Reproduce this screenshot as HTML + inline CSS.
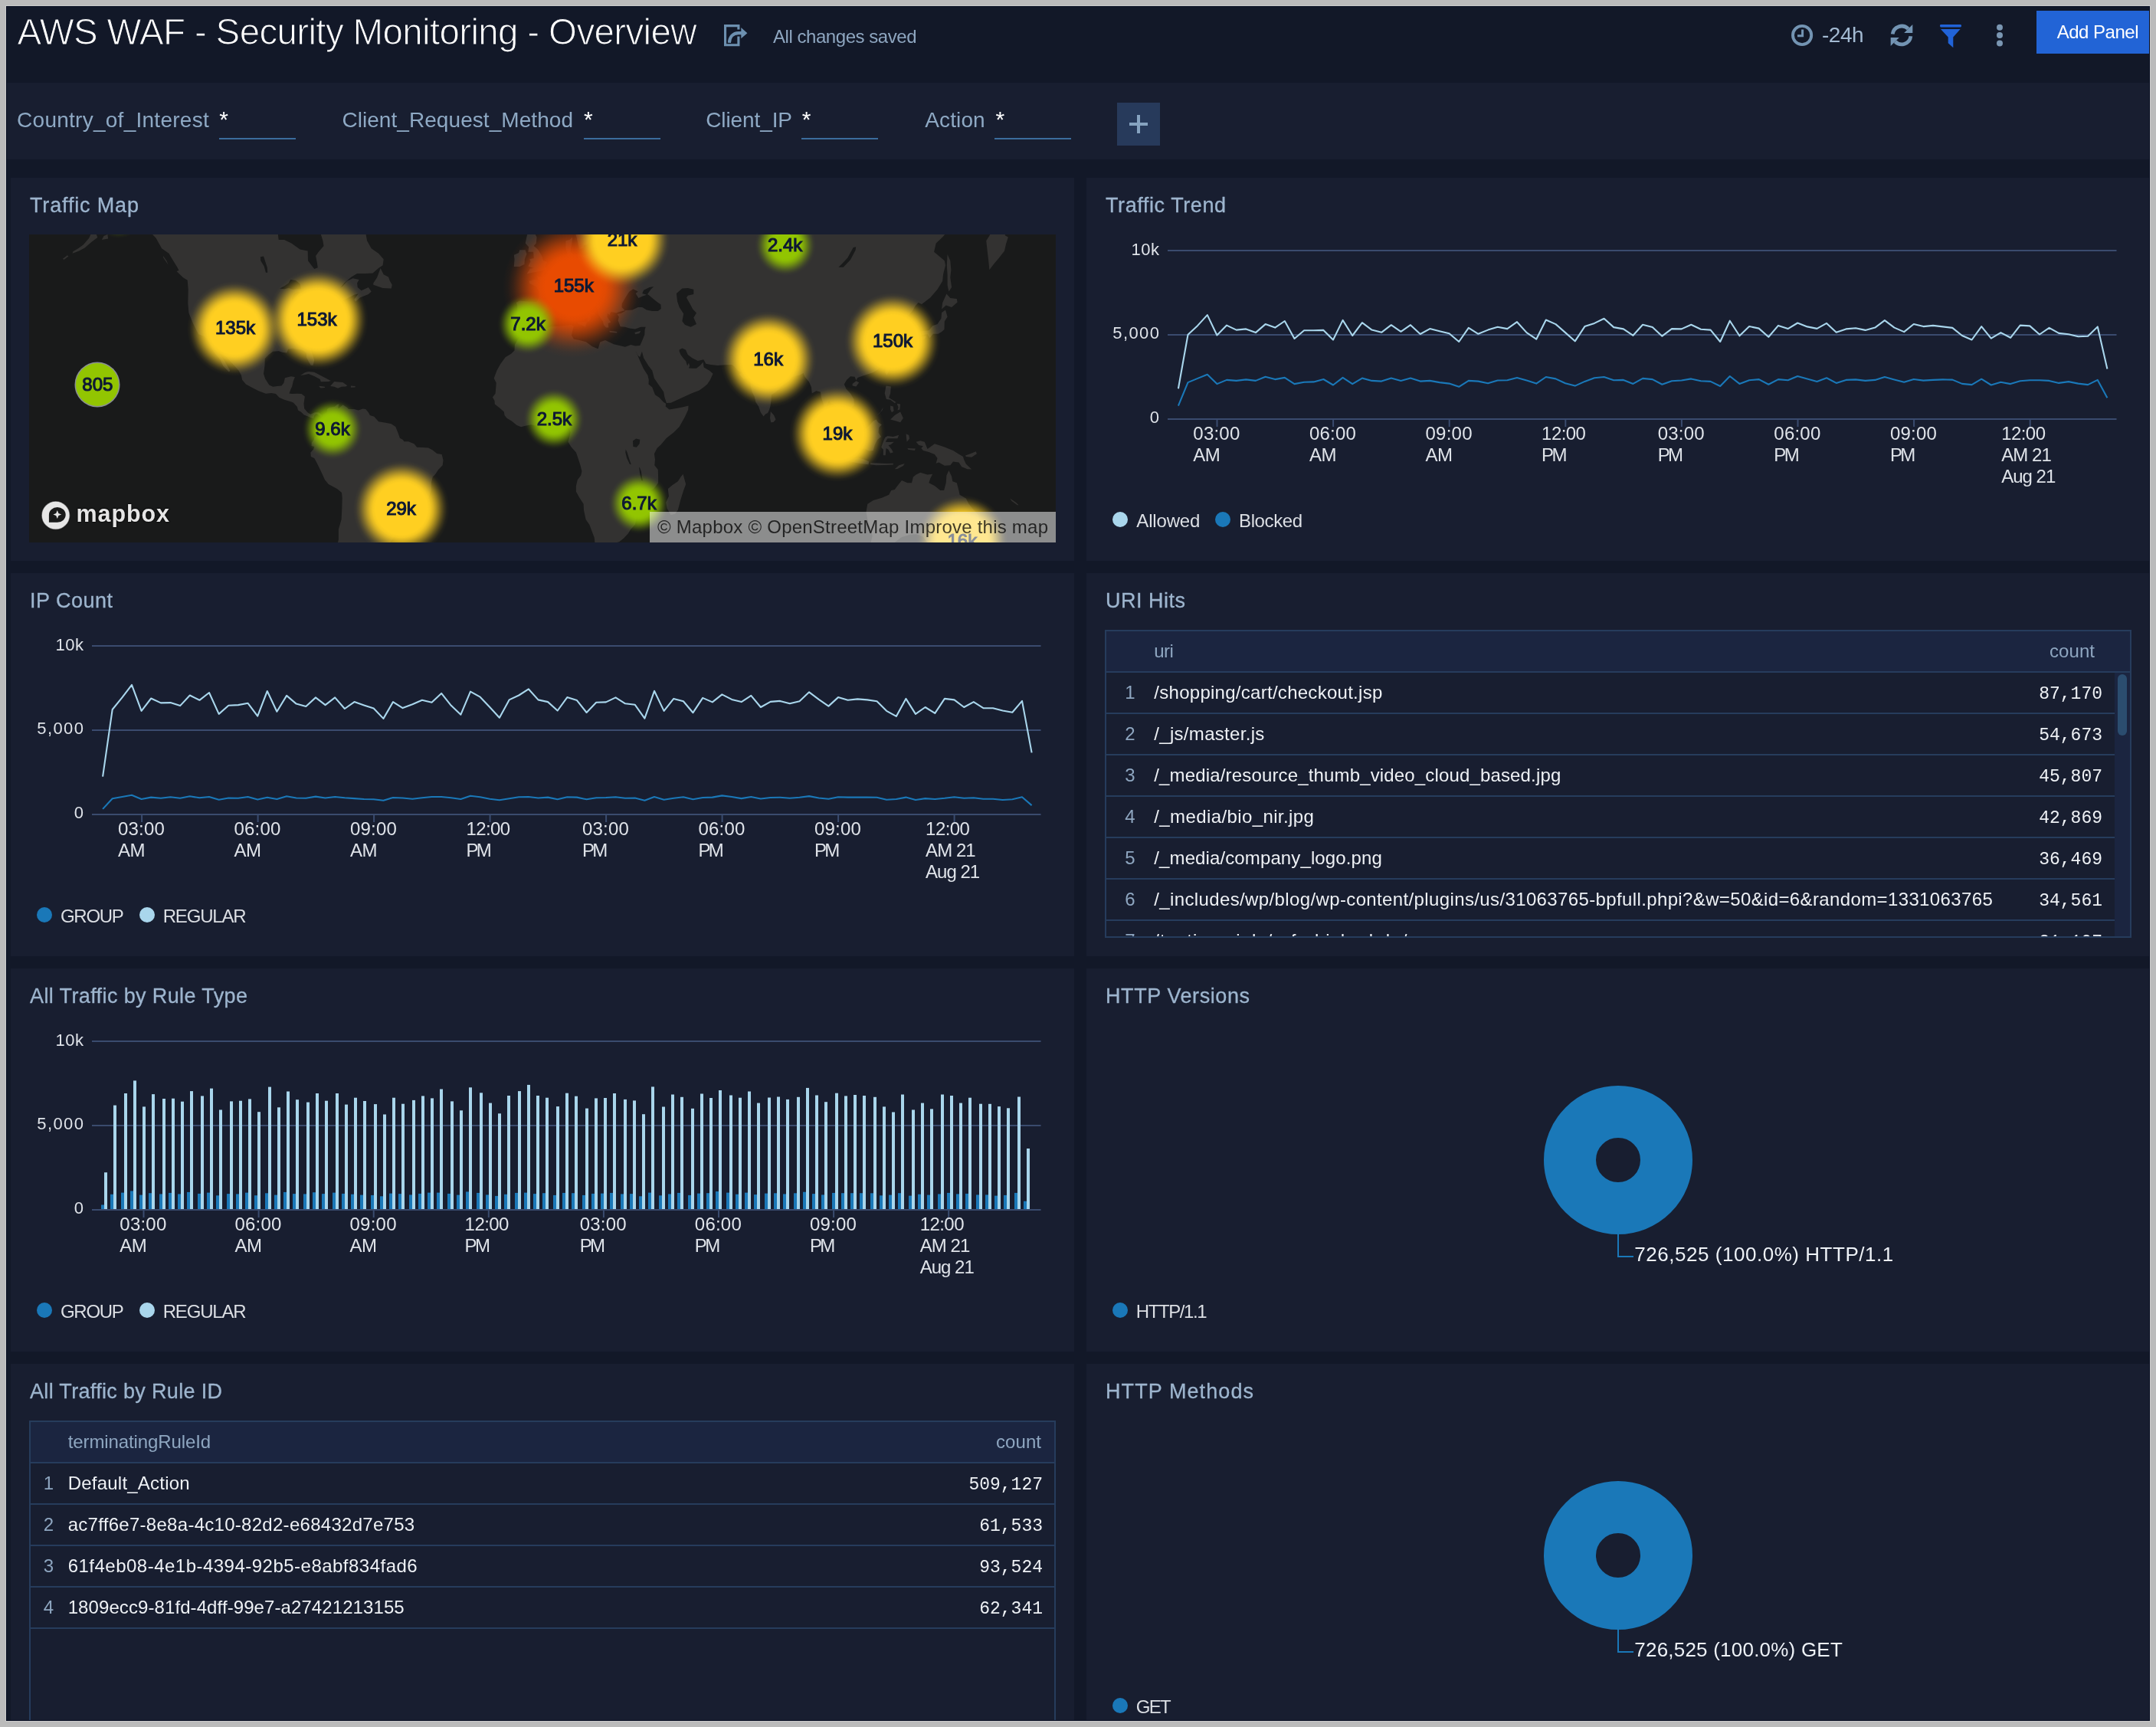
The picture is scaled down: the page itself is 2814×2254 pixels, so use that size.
<!DOCTYPE html>
<html lang="en"><head><meta charset="utf-8"><title>AWS WAF - Security Monitoring - Overview</title>
<style>
html,body{margin:0;padding:0;}
body{width:2814px;height:2254px;overflow:hidden;background:#bbbbbb;font-family:"Liberation Sans",sans-serif;position:relative;}
#app{will-change:transform;position:absolute;left:0;top:0;width:2814px;height:2254px;overflow:hidden;}
#page{position:absolute;left:8px;top:8px;width:2798px;height:2238px;background:#121828;box-shadow:inset 0 0 0 1px #0a1124;}
.t{position:absolute;white-space:pre;display:block;}
.abs{position:absolute;}
.pc{position:absolute;width:2814px;height:2254px;}
.panel{position:absolute;width:1388px;height:500px;background:#181e30;overflow:hidden;}
.filterbar{position:absolute;left:8px;top:108px;width:2798px;height:100px;background:#181e30;}
.uline{position:absolute;height:2px;width:100px;background:#3b6c9c;top:180px;}
svg{position:absolute;left:0;top:0;overflow:visible;}
svg text{font-family:"Liberation Sans",sans-serif;}
.tbl{position:absolute;box-sizing:border-box;border:2px solid #263c5c;}
.th{position:absolute;left:0;top:0;height:52px;background:#1b2540;border-bottom:2px solid #263c5c;}
.tr{position:absolute;left:0;height:52px;border-bottom:2px solid #263c5c;}
.blob{position:absolute;border-radius:50%;}
.bt{position:absolute;white-space:pre;font-size:24px;line-height:24px;color:#0e1934;-webkit-text-stroke:1.1px #0e1934;transform:translate(-50%,0);}
.frame{position:absolute;background:#bbbbbb;z-index:50;}
.fr2{position:absolute;z-index:51;}
</style></head><body><div id="app"><div id="page"></div>

<header>
<span class="t" style="left:22.50px;top:17.79px;font-size:47.5px;line-height:47.5px;color:#ffffff;letter-spacing:-0.650px;-webkit-text-stroke:1.1px #121828;">AWS WAF - Security Monitoring - Overview</span>
<svg width="2814" height="110" viewBox="0 0 2814 110">
<g fill="none" stroke="#6d90b0" stroke-width="3.1" stroke-linejoin="miter">
<path d="M963.9 38.6 V33.6 H946.55 V58.7 H963.9 V47.6"/>
<path d="M951.9 55.8 C952.2 48.5 956.5 43.1 964 43.1 H968" stroke-width="4.1"/>
</g>
<path d="M967.3 35.9 L975.4 43.2 L967.3 50.3 Z" fill="#6d90b0"/>
<!-- clock -->
<circle cx="2352.1" cy="46" r="12.1" fill="none" stroke="#7394b3" stroke-width="3.9"/>
<path d="M2352.6 38.4 V46.7 H2346" fill="none" stroke="#7394b3" stroke-width="3"/>
<!-- refresh -->
<g fill="none" stroke="#7394b3" stroke-width="4.8">
<path d="M2470.2 44.5 A12 12 0 0 1 2490.6 37.6"/>
<path d="M2493.9 47.3 A12 12 0 0 1 2473.5 54.3"/>
</g>
<path d="M2496.3 31.9 V43 H2485.2 Z" fill="#7394b3"/>
<path d="M2467.7 60 V48.9 H2478.8 Z" fill="#7394b3"/>
<!-- filter -->
<rect x="2532" y="32.1" width="28" height="3.3" rx="1.4" fill="#2163d8"/>
<path d="M2533 37.9 H2558.6 L2549.3 48.4 V62.2 L2542.7 56.3 V48.4 Z" fill="#2163d8"/>
<!-- kebab -->
<g fill="#7a96b2"><circle cx="2610" cy="35.7" r="4"/><circle cx="2610" cy="46" r="4"/><circle cx="2610" cy="56.4" r="4"/></g>
</svg>
<span class="t" style="left:1009.00px;top:36.08px;font-size:24px;line-height:24px;color:#8ea6c0;letter-spacing:-0.456px;">All changes saved</span>
<span class="t" style="left:2377.90px;top:32.20px;font-size:28px;line-height:28px;color:#a3bad2;letter-spacing:-0.415px;">-24h</span>
<div class="abs" style="left:2658px;top:14px;width:148px;height:56px;background:#2264d6;"></div>
<span class="t" style="left:2684.70px;top:29.68px;font-size:24px;line-height:24px;color:#ffffff;letter-spacing:-0.495px;">Add Panel</span>
</header>
<div class="filterbar"><div class="pc" style="left:-8px;top:-108px;">
<span class="t" style="left:22.10px;top:142.50px;font-size:28px;line-height:28px;color:#8ea9c4;letter-spacing:0.260px;">Country_of_Interest</span>
<span class="t" style="left:286.20px;top:141.41px;font-size:30px;line-height:30px;color:#ffffff;">*</span>
<div class="uline" style="left:285.7px;"></div>
<span class="t" style="left:446.40px;top:142.50px;font-size:28px;line-height:28px;color:#8ea9c4;letter-spacing:0.059px;">Client_Request_Method</span>
<span class="t" style="left:762.10px;top:141.41px;font-size:30px;line-height:30px;color:#ffffff;">*</span>
<div class="uline" style="left:761.8px;"></div>
<span class="t" style="left:921.20px;top:142.50px;font-size:28px;line-height:28px;color:#8ea9c4;letter-spacing:-0.102px;">Client_IP</span>
<span class="t" style="left:1046.80px;top:141.41px;font-size:30px;line-height:30px;color:#ffffff;">*</span>
<div class="uline" style="left:1045.6px;"></div>
<span class="t" style="left:1207.20px;top:142.50px;font-size:28px;line-height:28px;color:#8ea9c4;letter-spacing:0.135px;">Action</span>
<span class="t" style="left:1299.40px;top:141.41px;font-size:30px;line-height:30px;color:#ffffff;">*</span>
<div class="uline" style="left:1297.8px;"></div>
<div class="abs" style="left:1458px;top:134px;width:56px;height:56px;background:#273a5b;"></div>
<div class="abs" style="left:1474px;top:160px;width:24px;height:4px;background:#86a3c0;"></div><div class="abs" style="left:1484px;top:150px;width:4px;height:24px;background:#86a3c0;"></div>
</div></div>
<section class="panel" style="left:14px;top:232px;"><div class="pc" style="left:-14px;top:-232px;">
<span class="t" style="left:39.00px;top:255.14px;font-size:27px;line-height:27px;color:#9db5ce;letter-spacing:0.846px;-webkit-text-stroke:0.3px #9db5ce;">Traffic Map</span>
<div class="abs" id="map" style="left:38px;top:306px;width:1340px;height:402px;background:#191a1a;overflow:hidden;">
<svg width="1340" height="402" viewBox="0 0 1340 402" style="overflow:hidden"><path d="M37.2 -62.6 L74.4 -28.5 L104.2 -20.7 L111.7 -16.9 L126.6 -20.7 L145.2 -13.2 L158.2 -3.0 L165.6 4.8 L173.1 18.3 L182.4 24.8 L186.1 31.1 L193.6 43.3 L197.3 50.4 L206.6 59.0 L207.7 71.7 L207.3 90.1 L208.4 102.6 L213.7 115.5 L216.6 121.6 L221.1 130.3 L228.9 133.0 L233.8 139.2 L238.2 148.4 L243.8 157.0 L249.4 163.3 L253.1 171.5 L260.6 179.3 L262.4 178.1 L258.7 171.5 L255.0 165.3 L250.1 157.8 L244.5 148.4 L242.7 143.2 L248.6 145.8 L252.0 152.7 L256.8 159.1 L262.4 165.3 L268.0 171.5 L273.6 177.7 L276.9 183.7 L278.1 189.7 L282.9 195.6 L290.3 199.6 L299.6 204.3 L308.9 207.7 L316.4 207.0 L322.0 208.1 L326.4 212.8 L333.1 215.8 L342.4 218.5 L345.1 219.7 L349.9 225.0 L351.0 229.5 L354.7 231.4 L358.8 235.6 L362.9 237.1 L367.8 239.3 L371.1 240.1 L372.2 236.3 L374.8 234.1 L378.9 236.3 L381.5 239.3 L382.3 235.6 L377.8 232.2 L373.0 232.2 L367.4 234.8 L363.7 232.6 L359.2 227.3 L358.5 220.8 L359.9 211.6 L355.5 208.1 L349.9 207.7 L343.2 208.1 L339.5 207.4 L341.7 201.5 L343.2 198.4 L344.7 191.7 L346.9 186.1 L341.7 185.3 L333.9 187.3 L332.4 193.7 L329.4 197.6 L323.8 198.0 L318.2 198.8 L313.4 196.4 L308.2 188.5 L306.0 181.7 L307.5 171.5 L307.8 162.0 L312.7 157.0 L318.2 152.7 L325.7 152.3 L331.3 154.0 L336.5 154.4 L338.0 149.7 L344.3 148.8 L351.0 150.1 L356.6 150.6 L361.8 154.8 L362.2 160.7 L365.1 166.6 L367.8 170.7 L370.7 170.7 L372.2 164.1 L370.0 157.0 L367.0 148.4 L368.5 141.9 L374.1 137.5 L380.4 133.0 L385.2 129.8 L388.6 127.1 L387.1 119.7 L386.0 114.6 L390.1 112.2 L393.8 106.5 L394.6 102.6 L402.0 100.1 L408.7 96.6 L406.8 91.6 L409.4 86.0 L415.0 83.4 L420.6 80.8 L424.3 78.7 L429.5 77.6 L424.3 85.0 L426.2 87.5 L431.8 82.4 L442.9 78.1 L446.7 74.4 L442.9 69.0 L433.6 73.3 L428.8 69.0 L428.1 63.5 L430.7 59.0 L422.5 57.3 L415.0 60.7 L409.4 67.4 L405.7 70.1 L411.3 63.5 L420.6 55.6 L428.1 51.0 L439.2 51.0 L448.5 50.4 L456.0 43.9 L461.6 40.3 L462.7 32.3 L456.0 24.8 L446.7 18.3 L441.1 8.2 L439.2 -2.2 L429.9 -16.9 L409.4 -36.6 L379.7 -36.6 L381.5 -13.2 L379.7 -3.7 L383.4 8.2 L384.5 15.0 L377.8 22.8 L374.1 27.9 L375.9 37.3 L376.7 43.3 L372.2 45.1 L368.5 40.3 L364.0 34.2 L363.7 21.5 L353.6 19.6 L342.4 11.6 L333.1 6.9 L325.7 6.9 L324.6 -2.2 L318.2 -5.8 L317.5 -20.7 L260.6 -81.6 L148.9 -102.4 L37.2 -102.4ZM85.6 -5.8 L89.3 4.1 L81.9 9.6 L72.6 17.6 L65.1 21.5 L56.6 24.8 L57.3 22.2 L64.0 18.3 L70.7 13.6 L78.2 4.8 L81.9 -3.7 L83.8 -9.5ZM51.4 28.6 L45.4 33.0 L43.9 31.7 L49.9 27.3ZM94.9 6.9 L103.1 5.5 L102.4 -0.1 L97.5 2.0ZM192.4 48.1 L201.0 56.2 L209.9 61.8 L210.7 59.0 L204.7 52.2 L195.4 46.9ZM174.9 27.9 L179.4 34.2 L181.6 39.7 L178.7 35.4 L175.3 30.5ZM449.3 65.7 L461.6 70.1 L472.7 70.6 L473.8 65.7 L470.9 60.7 L469.0 55.6 L462.7 52.2 L458.6 43.9 L456.7 49.2 L454.1 56.2 L449.3 63.5ZM354.0 184.1 L360.3 180.1 L364.8 178.9 L372.2 179.7 L380.4 184.1 L389.0 188.5 L393.8 190.9 L390.8 192.1 L380.8 192.3 L379.7 188.9 L372.2 184.9 L364.8 182.1 L359.2 183.3ZM393.1 198.0 L398.3 192.1 L403.1 192.5 L409.4 192.9 L415.4 197.2 L413.2 198.4 L407.6 198.8 L403.1 200.7 L398.3 198.8ZM419.9 197.6 L425.8 198.0 L425.4 199.6 L419.9 199.8ZM378.6 197.8 L386.0 198.8 L386.0 200.0 L380.8 200.4 L378.6 198.8ZM381.5 239.3 L383.4 235.2 L388.6 232.2 L389.0 228.0 L391.6 226.1 L398.3 225.0 L402.0 221.9 L404.6 221.2 L403.1 226.5 L404.6 226.9 L409.4 222.3 L415.0 225.7 L416.9 228.0 L424.3 228.0 L429.9 229.5 L435.5 227.6 L439.2 228.0 L442.9 232.2 L444.8 235.9 L450.4 237.8 L456.0 244.2 L465.3 245.7 L472.7 247.2 L478.3 250.9 L482.0 260.3 L483.9 265.8 L487.6 267.7 L489.5 270.3 L495.1 270.3 L502.5 273.3 L506.2 277.8 L513.7 278.1 L521.1 278.5 L526.7 281.5 L532.3 286.0 L538.6 287.1 L540.5 294.6 L539.7 301.3 L534.1 307.0 L530.4 312.7 L526.7 316.5 L524.8 324.2 L524.8 333.9 L522.2 341.7 L518.1 350.9 L513.7 355.7 L504.4 356.5 L497.7 359.8 L491.3 365.1 L489.1 372.1 L488.4 378.4 L483.9 384.8 L480.2 391.3 L475.7 395.7 L470.9 402.4 L465.3 411.5 L454.1 420.8 L402.0 420.8 L402.0 406.9 L403.9 397.9 L403.9 384.8 L407.6 372.1 L408.3 357.7 L408.7 343.7 L408.0 337.0 L402.0 331.9 L390.8 326.1 L386.0 320.3 L382.6 312.7 L378.9 305.1 L375.2 297.6 L372.2 291.9 L367.8 290.1 L367.4 284.5 L371.1 280.4 L372.2 277.0 L368.5 275.9 L368.9 271.4 L371.9 267.7 L372.2 264.7 L376.3 263.2 L377.8 258.4 L381.5 254.7 L382.3 249.1 L381.5 243.5 L380.0 240.8ZM648.0 124.8 L660.7 127.6 L670.0 124.8 L681.2 120.2 L696.1 119.3 L707.2 117.9 L710.9 119.7 L709.1 126.2 L708.0 131.6 L710.9 136.6 L718.4 137.9 L726.6 140.1 L735.1 146.2 L742.6 149.3 L745.2 140.5 L751.9 137.9 L763.1 143.2 L777.9 146.7 L785.4 144.1 L791.0 145.4 L797.3 144.9 L799.9 152.7 L797.3 159.9 L794.7 158.2 L791.3 151.0 L794.7 159.1 L798.4 167.4 L802.1 175.6 L807.4 183.7 L808.8 189.7 L808.5 195.6 L813.3 199.6 L817.0 209.3 L822.6 213.1 L828.2 218.9 L831.2 220.8 L830.8 224.6 L835.6 228.4 L843.1 227.3 L852.4 225.4 L860.6 223.5 L860.2 228.8 L856.1 237.8 L848.7 250.9 L841.2 258.4 L831.9 265.8 L824.5 274.4 L819.6 278.9 L815.9 286.3 L817.0 293.8 L816.3 301.3 L820.8 307.0 L821.1 316.5 L821.1 324.2 L815.2 331.9 L807.4 335.8 L800.3 343.7 L802.1 351.7 L801.8 359.8 L792.8 365.9 L792.1 372.1 L791.0 378.4 L785.4 384.8 L781.7 390.5 L776.1 396.6 L770.5 401.1 L763.1 403.3 L744.4 406.9 L738.5 403.3 L737.7 395.7 L734.4 387.0 L731.4 378.9 L726.6 372.1 L724.0 359.8 L723.6 351.7 L718.4 343.7 L713.9 335.8 L713.9 328.0 L715.8 320.3 L720.2 314.6 L721.4 308.9 L719.5 301.3 L715.8 290.1 L713.9 284.5 L707.2 277.0 L703.5 270.7 L705.0 265.5 L706.5 258.4 L705.4 253.5 L701.6 250.9 L696.1 251.3 L690.5 249.8 L686.7 244.6 L679.3 244.2 L674.5 245.3 L666.3 248.3 L662.6 249.8 L655.1 248.3 L647.7 249.8 L642.1 251.3 L636.5 249.1 L629.8 243.5 L623.5 239.7 L620.5 235.9 L619.8 231.4 L614.2 226.5 L607.8 221.6 L607.5 217.0 L604.9 212.4 L608.6 207.4 L609.3 199.6 L609.7 193.7 L606.7 187.7 L610.4 177.7 L614.9 169.5 L621.6 160.3 L629.1 155.7 L633.5 151.4 L633.9 144.1 L638.4 136.1 L644.7 133.0ZM853.5 312.7 L857.2 326.1 L854.2 333.9 L850.5 345.7 L846.8 359.8 L843.1 364.7 L837.5 365.9 L832.7 357.7 L831.2 349.7 L834.9 341.7 L833.8 331.9 L839.4 327.3 L846.8 322.3 L850.5 316.5ZM649.2 123.9 L645.8 120.2 L642.1 119.3 L636.9 119.3 L637.2 112.2 L634.6 111.3 L637.2 100.1 L637.2 92.6 L635.8 89.1 L640.2 86.5 L651.4 87.5 L662.6 88.0 L665.2 82.4 L665.5 74.4 L661.8 67.9 L653.2 64.1 L652.5 60.7 L658.8 59.0 L664.0 59.6 L663.3 53.9 L665.5 55.6 L670.7 55.0 L675.6 51.0 L676.3 46.9 L681.2 44.5 L684.9 40.3 L687.9 34.2 L692.3 31.1 L696.1 30.5 L701.6 29.2 L702.4 24.8 L700.5 18.3 L700.5 8.2 L705.4 6.9 L709.1 3.4 L708.3 11.6 L707.2 18.3 L706.5 22.8 L710.9 26.7 L716.5 25.4 L722.1 27.9 L729.6 26.0 L738.9 23.5 L743.7 25.4 L748.2 21.5 L748.2 8.2 L751.9 3.4 L757.5 8.2 L760.5 4.8 L761.2 -1.5 L757.5 -9.5 L774.2 -13.2 L781.7 -28.5 L893.3 -62.6 L1042.2 -81.6 L1191.1 -62.6 L1265.6 -44.9 L1278.6 -28.5 L1276.7 -9.5 L1273.7 1.3 L1277.8 3.4 L1274.9 13.0 L1273.0 21.5 L1265.6 31.1 L1259.2 38.5 L1253.3 46.3 L1252.5 37.3 L1250.7 21.5 L1249.2 8.2 L1253.6 1.3 L1258.1 -9.5 L1265.6 -20.7 L1250.7 -24.6 L1243.2 -9.5 L1232.1 -5.8 L1220.9 -8.0 L1202.3 -8.7 L1193.0 2.7 L1183.7 11.6 L1181.1 22.8 L1187.4 27.9 L1194.8 34.2 L1196.0 40.3 L1193.0 52.2 L1192.2 60.7 L1185.5 71.7 L1176.2 82.4 L1165.1 91.1 L1160.6 89.1 L1156.5 93.6 L1152.8 100.1 L1148.3 105.0 L1144.6 107.4 L1147.6 112.2 L1151.7 119.3 L1151.7 126.2 L1148.3 128.9 L1140.9 131.2 L1140.5 123.9 L1141.6 119.3 L1135.3 115.5 L1136.0 107.4 L1132.7 105.0 L1124.1 108.9 L1121.5 109.8 L1124.1 102.6 L1120.4 100.6 L1112.9 108.9 L1108.5 109.8 L1111.1 114.6 L1112.9 117.9 L1119.6 115.5 L1126.0 117.9 L1120.4 121.6 L1114.8 127.1 L1117.8 133.0 L1120.4 139.7 L1123.7 144.1 L1123.4 150.6 L1122.2 157.0 L1116.7 165.3 L1112.9 171.5 L1107.4 176.4 L1101.8 180.1 L1094.3 182.5 L1086.9 184.9 L1081.3 186.9 L1079.4 190.5 L1077.6 185.7 L1072.0 185.3 L1067.2 189.7 L1063.8 195.6 L1066.4 201.5 L1072.0 207.4 L1076.5 215.1 L1076.8 222.7 L1072.0 227.6 L1067.5 229.2 L1062.0 235.2 L1060.1 230.3 L1055.2 228.0 L1051.5 222.7 L1045.9 220.0 L1044.1 217.0 L1042.2 220.8 L1040.4 226.5 L1039.6 232.9 L1043.3 237.8 L1045.9 242.3 L1050.4 244.6 L1054.9 250.9 L1055.2 257.3 L1057.9 262.5 L1055.2 262.9 L1047.8 257.6 L1044.1 252.8 L1043.3 245.3 L1040.4 239.7 L1035.9 237.1 L1036.6 230.3 L1037.4 222.7 L1034.0 213.1 L1032.9 205.4 L1027.3 204.3 L1021.7 207.4 L1021.0 199.6 L1018.0 192.5 L1012.4 185.7 L1010.6 180.9 L1005.0 183.7 L999.4 184.9 L993.8 186.5 L992.0 191.7 L986.4 193.7 L978.9 201.5 L973.4 206.6 L968.9 209.3 L968.5 217.0 L967.4 224.6 L965.9 229.2 L964.1 232.9 L961.1 234.4 L958.5 237.4 L954.8 232.2 L952.1 224.6 L948.4 218.9 L946.6 211.2 L943.6 205.4 L941.7 197.6 L941.0 189.7 L940.2 184.5 L938.0 187.7 L932.4 188.5 L926.8 182.5 L930.6 180.5 L925.0 177.7 L920.5 172.4 L917.5 169.9 L908.2 170.3 L898.9 171.1 L889.6 169.9 L883.3 168.7 L880.3 163.3 L872.9 164.9 L865.4 161.2 L859.8 157.0 L856.9 150.6 L852.4 148.4 L848.7 150.6 L848.7 152.7 L850.5 157.0 L854.2 162.0 L857.2 165.3 L859.1 171.5 L861.0 167.4 L862.1 171.5 L861.0 174.4 L865.4 174.8 L871.0 174.8 L876.6 170.3 L879.6 166.6 L880.7 173.6 L888.1 177.7 L892.6 181.7 L888.9 189.7 L885.1 195.6 L880.3 199.6 L874.7 203.5 L864.3 207.4 L852.4 213.1 L837.5 219.7 L831.9 220.0 L829.3 212.0 L828.2 205.4 L822.6 197.6 L815.9 187.7 L813.3 177.7 L808.5 171.5 L802.1 161.2 L799.9 152.7 L797.3 144.9 L800.3 138.3 L803.3 130.7 L803.6 123.9 L804.7 120.7 L798.4 120.7 L791.0 123.4 L783.5 122.5 L777.9 120.7 L771.6 120.2 L768.6 112.2 L769.8 107.4 L767.5 104.0 L772.4 103.0 L777.9 100.1 L777.9 99.1 L787.2 98.6 L794.7 95.1 L800.3 95.1 L805.9 98.6 L813.3 100.1 L820.8 100.1 L824.8 97.1 L824.5 91.6 L818.9 87.5 L813.3 82.9 L809.6 79.7 L807.0 78.1 L811.4 71.7 L815.2 67.9 L809.6 69.0 L802.1 72.8 L800.3 77.1 L805.9 78.7 L800.3 80.8 L795.4 82.9 L791.7 77.1 L794.7 74.4 L788.4 71.2 L783.5 74.4 L780.6 78.7 L776.8 85.0 L773.9 90.1 L773.5 95.1 L776.1 97.6 L777.6 99.6 L774.2 100.1 L768.6 101.6 L766.8 102.6 L759.3 101.1 L757.5 105.0 L754.9 103.0 L754.5 107.4 L757.5 112.2 L759.3 114.6 L755.6 116.0 L756.4 121.6 L753.0 121.6 L750.0 118.3 L748.9 113.6 L746.3 109.8 L742.6 103.5 L742.2 97.6 L738.9 92.6 L733.3 89.1 L727.7 85.0 L724.0 78.7 L721.0 76.6 L715.8 78.1 L715.8 83.4 L720.2 87.5 L724.0 93.6 L729.6 96.1 L729.6 98.1 L738.5 104.0 L738.1 105.5 L733.3 103.0 L731.4 106.5 L733.6 109.8 L730.7 113.2 L728.4 114.6 L728.8 107.4 L725.8 104.0 L722.1 101.1 L716.5 97.1 L710.9 92.6 L708.3 87.5 L702.8 82.9 L697.9 86.0 L692.3 89.6 L684.9 87.5 L681.2 90.1 L681.9 95.6 L677.4 98.6 L671.9 102.6 L668.9 108.4 L670.0 111.3 L667.4 115.5 L662.6 120.2 L653.2 120.7ZM651.4 -4.4 L658.8 -3.7 L662.6 3.4 L661.8 11.6 L658.8 15.0 L664.0 19.6 L669.3 27.9 L671.1 34.2 L676.3 36.1 L673.7 41.5 L675.2 45.1 L670.0 47.5 L662.6 48.7 L657.0 49.8 L649.5 51.6 L654.0 44.5 L658.8 43.9 L651.4 41.5 L654.4 35.4 L653.2 32.3 L658.8 31.1 L658.1 22.8 L651.4 22.8 L652.1 16.3 L647.7 11.6 L649.5 2.7ZM647.7 20.2 L649.5 25.4 L646.9 32.3 L646.5 39.1 L640.2 42.1 L632.8 42.1 L633.5 32.3 L632.8 26.7 L639.1 24.1 L640.2 20.2ZM712.1 -5.8 L716.5 11.6 L718.4 18.9 L723.2 18.3 L724.0 14.3 L729.6 13.0 L731.8 4.8 L733.3 -5.8ZM716.5 114.6 L728.1 113.6 L726.2 120.7 L716.5 116.5ZM700.5 100.1 L706.1 100.1 L705.7 108.9 L701.6 109.8ZM702.0 90.6 L705.4 90.6 L705.0 97.6 L702.4 96.6ZM757.5 125.7 L767.5 127.1 L766.8 128.5 L757.8 127.6ZM790.2 128.0 L798.4 125.7 L796.6 128.9 L791.3 130.3ZM1191.1 97.6 L1192.2 89.1 L1197.4 77.6 L1202.3 82.9 L1210.8 83.9 L1211.6 88.6 L1204.1 95.1 L1196.7 92.6ZM1196.0 98.6 L1198.6 107.4 L1194.8 113.6 L1194.5 123.9 L1191.1 127.1 L1186.6 129.8 L1179.9 129.8 L1175.5 135.2 L1172.5 130.3 L1165.1 131.6 L1157.6 133.0 L1157.6 130.7 L1163.2 126.2 L1174.4 125.3 L1179.2 119.3 L1185.5 116.9 L1190.4 109.8 L1191.1 102.1ZM1153.9 135.2 L1160.6 134.8 L1161.3 138.3 L1158.7 144.5 L1154.6 145.4 L1153.9 139.7ZM1163.2 133.9 L1170.6 132.1 L1169.9 135.2 L1165.1 138.3ZM1198.6 26.0 L1202.3 34.2 L1203.4 46.3 L1202.3 56.2 L1204.1 69.0 L1200.4 74.4 L1198.6 66.3 L1198.6 52.2 L1197.8 40.3ZM1120.4 170.7 L1124.1 173.6 L1119.6 183.7 L1117.0 179.7ZM1074.6 194.9 L1079.4 191.3 L1083.2 193.3 L1079.4 198.4 L1074.6 197.6ZM967.8 231.0 L972.2 235.9 L974.5 241.6 L971.5 245.0 L968.2 245.3 L967.0 239.7ZM1118.5 197.6 L1124.9 198.4 L1124.1 207.4 L1122.2 213.1 L1131.6 218.9 L1129.7 220.0 L1124.1 215.8 L1118.9 215.1 L1116.7 207.4ZM1124.1 241.6 L1129.7 235.9 L1137.1 231.4 L1140.9 239.7 L1137.1 245.3 L1131.6 243.5ZM1124.1 223.5 L1127.8 224.6 L1128.6 230.3 L1126.0 232.2 L1124.1 228.4ZM1132.7 220.8 L1137.1 221.6 L1136.4 228.4 L1133.4 229.5 L1134.5 225.4ZM1106.2 235.9 L1111.1 231.8 L1114.8 225.4 L1113.7 229.2 L1109.2 234.1ZM1075.7 262.1 L1079.4 261.4 L1085.0 257.3 L1090.6 254.7 L1096.2 249.8 L1101.8 243.5 L1105.5 241.6 L1108.1 245.3 L1112.9 248.3 L1109.2 252.1 L1108.5 258.4 L1112.2 264.0 L1107.4 267.7 L1103.6 275.1 L1101.8 281.9 L1096.2 282.6 L1090.6 279.6 L1085.0 279.6 L1080.2 277.0 L1079.4 272.5 L1075.7 267.7ZM1024.7 246.8 L1032.9 248.3 L1038.5 253.9 L1044.1 259.1 L1049.7 262.1 L1055.2 267.7 L1059.0 273.3 L1064.6 278.9 L1063.8 289.3 L1059.0 289.3 L1051.5 283.3 L1045.9 277.0 L1040.4 269.6 L1036.6 261.4 L1031.1 256.5ZM1061.6 293.1 L1066.4 290.1 L1073.9 292.3 L1082.4 291.6 L1089.5 293.4 L1096.2 296.4 L1095.5 300.2 L1083.2 298.7 L1073.9 296.8 L1066.4 295.3ZM1098.1 298.3 L1105.5 298.3 L1112.9 298.7 L1120.4 299.1 L1127.8 298.7 L1127.8 300.6 L1116.7 301.0 L1105.5 301.3 L1098.1 300.2ZM1129.7 306.2 L1135.3 301.3 L1142.7 299.1 L1140.9 302.1 L1133.4 305.9ZM1114.8 288.2 L1114.8 280.7 L1112.2 277.8 L1115.9 267.7 L1117.4 264.7 L1120.4 262.9 L1127.8 264.0 L1135.3 261.7 L1133.4 266.2 L1127.8 266.2 L1120.4 266.2 L1117.8 270.7 L1122.2 271.1 L1129.0 270.7 L1124.1 274.4 L1121.5 275.1 L1126.0 280.7 L1127.8 284.5 L1124.1 285.6 L1121.5 280.7 L1118.5 278.9 L1117.8 288.2ZM1144.6 260.3 L1148.3 262.1 L1149.0 266.6 L1145.7 270.7 L1145.0 265.8ZM1146.4 278.9 L1156.9 279.6 L1155.8 281.9 L1147.2 280.7ZM1157.6 270.7 L1163.2 269.2 L1168.8 270.7 L1172.5 280.0 L1181.8 273.3 L1187.4 275.1 L1194.8 277.4 L1206.0 281.9 L1212.7 286.3 L1219.0 290.1 L1220.1 293.8 L1222.8 299.5 L1230.2 306.6 L1224.6 306.2 L1217.2 303.2 L1213.4 297.6 L1206.0 296.4 L1202.3 301.3 L1194.8 301.7 L1187.4 297.6 L1183.7 298.7 L1185.5 291.9 L1181.8 287.1 L1174.4 284.1 L1166.9 281.9 L1164.3 278.9 L1166.9 276.3 L1161.3 275.1ZM1222.0 288.6 L1228.3 286.3 L1235.8 283.3 L1236.9 286.3 L1230.2 290.8 L1222.8 290.1ZM1094.3 351.7 L1092.5 361.8 L1094.3 372.1 L1098.1 384.8 L1100.7 393.5 L1098.1 403.8 L1109.2 409.2 L1114.8 402.4 L1129.7 402.0 L1139.0 394.9 L1150.2 391.8 L1158.4 391.3 L1166.9 394.4 L1169.5 397.9 L1174.4 405.1 L1182.9 397.1 L1183.7 406.9 L1191.1 416.1 L1228.3 420.8 L1232.1 406.9 L1233.9 400.2 L1237.6 395.7 L1239.5 389.2 L1241.4 380.6 L1240.6 374.2 L1238.8 365.9 L1231.3 357.7 L1226.5 351.7 L1222.8 344.5 L1214.6 339.8 L1213.4 333.9 L1210.8 324.2 L1205.3 322.3 L1204.1 315.7 L1200.4 308.1 L1197.4 314.6 L1196.7 324.2 L1194.1 333.9 L1189.2 333.9 L1181.8 328.0 L1174.4 324.2 L1176.2 318.4 L1179.2 312.7 L1172.5 313.5 L1163.2 310.8 L1157.6 313.5 L1153.9 316.5 L1152.0 324.2 L1146.4 324.2 L1139.0 321.1 L1133.4 328.0 L1129.7 333.1 L1125.2 333.9 L1122.2 339.8 L1112.9 343.7 L1101.8 346.9ZM1280.4 344.5 L1287.9 349.7 L1291.6 353.3 L1289.8 353.3 L1282.3 347.7ZM89.3 190.9 L93.1 192.5 L91.2 195.6 L89.3 193.7Z" fill="#333231"/><path d="M844.9 77.1 L852.4 70.6 L859.8 70.1 L867.3 71.7 L867.3 78.1 L859.8 79.7 L858.0 82.4 L863.6 92.6 L866.2 97.6 L871.0 102.6 L867.3 108.4 L871.0 116.9 L863.6 120.7 L856.1 117.9 L852.4 113.2 L854.2 103.5 L848.7 95.1 L846.1 87.5ZM1056.4 42.7 L1062.7 42.7 L1072.0 33.0 L1078.7 20.2 L1079.1 16.3 L1075.7 17.0 L1068.3 30.5 L1060.8 38.5ZM327.2 70.6 L333.1 67.4 L338.7 63.5 L341.3 59.0 L348.0 60.1 L353.6 64.6 L355.1 71.2 L349.9 71.2 L344.3 71.7 L338.7 70.1 L333.1 71.2ZM342.8 96.1 L346.9 96.6 L349.1 90.1 L349.9 80.8 L353.6 75.5 L351.8 74.4 L346.9 76.6 L343.2 82.4 L343.2 90.1ZM355.1 74.4 L359.2 74.4 L366.6 75.0 L372.2 79.7 L371.5 82.4 L366.6 81.8 L365.5 89.1 L362.9 90.1 L359.6 86.0 L359.2 79.7 L355.1 76.0ZM359.6 96.6 L364.8 97.6 L372.2 94.1 L376.3 91.1 L374.1 90.6 L367.4 92.1 L361.8 95.1ZM373.0 88.6 L379.7 88.6 L386.0 87.0 L386.0 83.9 L379.7 85.2 L374.1 86.5ZM301.9 29.2 L306.0 28.6 L310.8 43.3 L311.2 49.8 L308.9 49.8 L306.7 41.5 L302.2 34.2ZM788.0 269.6 L792.1 266.6 L797.3 267.7 L796.6 273.3 L792.8 277.8 L788.4 277.0ZM778.7 280.4 L780.6 284.5 L783.5 293.8 L785.8 300.2 L783.9 299.8 L780.2 291.9 L778.3 284.5ZM796.6 303.6 L798.8 308.9 L799.9 316.5 L801.0 321.5 L799.2 321.1 L797.3 312.7 L796.2 305.1Z" fill="#191a1a"/></svg>
<div class="blob" style="left:617.5px;top:-23.0px;width:184.0px;height:184.0px;background:radial-gradient(circle closest-side,#e84b01 0,#e84b01 39.1%,#e84b01f4 46.7%,#e84b01d7 54.3%,#e84b01ae 62.0%,#e84b0180 69.6%,#e84b0151 77.2%,#e84b0128 84.8%,#e84b010b 92.4%,#e84b0100 100.0%);"></div>
<div class="blob" style="left:711.0px;top:-56.0px;width:126.0px;height:126.0px;background:radial-gradient(circle closest-side,#ffcf21 0,#ffcf21 54.0%,#ffcf21f4 59.7%,#ffcf21d7 65.5%,#ffcf21ae 71.2%,#ffcf2180 77.0%,#ffcf2151 82.7%,#ffcf2128 88.5%,#ffcf210b 94.2%,#ffcf2100 100.0%);"></div>
<div class="blob" style="left:205.5px;top:60.5px;width:124.0px;height:124.0px;background:radial-gradient(circle closest-side,#ffcf21 0,#ffcf21 53.2%,#ffcf21f4 59.1%,#ffcf21d7 64.9%,#ffcf21ae 70.8%,#ffcf2180 76.6%,#ffcf2151 82.5%,#ffcf2128 88.3%,#ffcf210b 94.2%,#ffcf2100 100.0%);"></div>
<div class="blob" style="left:311.0px;top:44.5px;width:132.0px;height:132.0px;background:radial-gradient(circle closest-side,#ffcf21 0,#ffcf21 56.1%,#ffcf21f4 61.6%,#ffcf21d7 67.0%,#ffcf21ae 72.5%,#ffcf2180 78.0%,#ffcf2151 83.5%,#ffcf2128 89.0%,#ffcf210b 94.5%,#ffcf2100 100.0%);"></div>
<div class="blob" style="left:901.6px;top:99.8px;width:126.0px;height:126.0px;background:radial-gradient(circle closest-side,#ffcf21 0,#ffcf21 54.0%,#ffcf21f4 59.7%,#ffcf21d7 65.5%,#ffcf21ae 71.2%,#ffcf2180 77.0%,#ffcf2151 82.7%,#ffcf2128 88.5%,#ffcf210b 94.2%,#ffcf2100 100.0%);"></div>
<div class="blob" style="left:1064.0px;top:76.0px;width:126.0px;height:126.0px;background:radial-gradient(circle closest-side,#ffcf21 0,#ffcf21 54.0%,#ffcf21f4 59.7%,#ffcf21d7 65.5%,#ffcf21ae 71.2%,#ffcf2180 77.0%,#ffcf2151 82.7%,#ffcf2128 88.5%,#ffcf210b 94.2%,#ffcf2100 100.0%);"></div>
<div class="blob" style="left:991.9px;top:197.0px;width:126.0px;height:126.0px;background:radial-gradient(circle closest-side,#ffcf21 0,#ffcf21 54.0%,#ffcf21f4 59.7%,#ffcf21d7 65.5%,#ffcf21ae 71.2%,#ffcf2180 77.0%,#ffcf2151 82.7%,#ffcf2128 88.5%,#ffcf210b 94.2%,#ffcf2100 100.0%);"></div>
<div class="blob" style="left:422.5px;top:295.0px;width:126.0px;height:126.0px;background:radial-gradient(circle closest-side,#ffcf21 0,#ffcf21 54.0%,#ffcf21f4 59.7%,#ffcf21d7 65.5%,#ffcf21ae 71.2%,#ffcf2180 77.0%,#ffcf2151 82.7%,#ffcf2128 88.5%,#ffcf210b 94.2%,#ffcf2100 100.0%);"></div>
<div class="blob" style="left:1157.8px;top:340.0px;width:120.0px;height:120.0px;background:radial-gradient(circle closest-side,#ffcf21 0,#ffcf21 53.3%,#ffcf21f4 59.2%,#ffcf21d7 65.0%,#ffcf21ae 70.8%,#ffcf2180 76.7%,#ffcf2151 82.5%,#ffcf2128 88.3%,#ffcf210b 94.2%,#ffcf2100 100.0%);"></div>
<div class="blob" style="left:85.0px;top:-59.0px;width:64.0px;height:64.0px;background:radial-gradient(circle closest-side,#92c501 0,#92c501 25.0%,#92c501f4 34.4%,#92c501d7 43.8%,#92c501ae 53.1%,#92c50180 62.5%,#92c50151 71.9%,#92c50128 81.2%,#92c5010b 90.6%,#92c50100 100.0%);"></div>
<div class="blob" style="left:946.7px;top:-26.0px;width:80.0px;height:80.0px;background:radial-gradient(circle closest-side,#92c501 0,#92c501 42.5%,#92c501f4 49.7%,#92c501d7 56.9%,#92c501ae 64.1%,#92c50180 71.2%,#92c50151 78.4%,#92c50128 85.6%,#92c5010b 92.8%,#92c50100 100.0%);"></div>
<div class="blob" style="left:611.0px;top:77.4px;width:80.0px;height:80.0px;background:radial-gradient(circle closest-side,#92c501 0,#92c501 42.5%,#92c501f4 49.7%,#92c501d7 56.9%,#92c501ae 64.1%,#92c50180 71.2%,#92c50151 78.4%,#92c50128 85.6%,#92c5010b 92.8%,#92c50100 100.0%);"></div>
<div class="blob" style="left:61.4px;top:168.0px;width:56.0px;height:56.0px;background:#92c501;box-shadow:0 0 0 1.5px #8a8f94;"></div>
<div class="blob" style="left:356.0px;top:213.7px;width:80.0px;height:80.0px;background:radial-gradient(circle closest-side,#92c501 0,#92c501 42.5%,#92c501f4 49.7%,#92c501d7 56.9%,#92c501ae 64.1%,#92c50180 71.2%,#92c50151 78.4%,#92c50128 85.6%,#92c5010b 92.8%,#92c50100 100.0%);"></div>
<div class="blob" style="left:645.4px;top:201.4px;width:80.0px;height:80.0px;background:radial-gradient(circle closest-side,#92c501 0,#92c501 42.5%,#92c501f4 49.7%,#92c501d7 56.9%,#92c501ae 64.1%,#92c50180 71.2%,#92c50151 78.4%,#92c50128 85.6%,#92c5010b 92.8%,#92c50100 100.0%);"></div>
<div class="blob" style="left:756.0px;top:311.0px;width:80.0px;height:80.0px;background:radial-gradient(circle closest-side,#92c501 0,#92c501 42.5%,#92c501f4 49.7%,#92c501d7 56.9%,#92c501ae 64.1%,#92c50180 71.2%,#92c50151 78.4%,#92c50128 85.6%,#92c5010b 92.8%,#92c50100 100.0%);"></div>
<span class="bt" style="left:710.7px;top:55.0px;">155k</span>
<span class="bt" style="left:774.0px;top:-5.0px;">21k</span>
<span class="bt" style="left:269.0px;top:109.6px;">135k</span>
<span class="bt" style="left:375.5px;top:99.0px;">153k</span>
<span class="bt" style="left:964.6px;top:150.8px;">16k</span>
<span class="bt" style="left:1127.0px;top:127.0px;">150k</span>
<span class="bt" style="left:1054.9px;top:248.0px;">19k</span>
<span class="bt" style="left:485.5px;top:346.0px;">29k</span>
<span class="bt" style="left:1217.8px;top:388.0px;">16k</span>
<span class="bt" style="left:986.7px;top:2.0px;">2.4k</span>
<span class="bt" style="left:651.0px;top:105.4px;">7.2k</span>
<span class="bt" style="left:89.4px;top:184.0px;">805</span>
<span class="bt" style="left:396.0px;top:241.7px;">9.6k</span>
<span class="bt" style="left:685.4px;top:229.4px;">2.5k</span>
<span class="bt" style="left:796.0px;top:339.0px;">6.7k</span>
<svg width="1340" height="402" viewBox="38 306 1340 402" style="overflow:hidden">
<circle cx="72.7" cy="672.7" r="18.6" fill="#e6e6e6" stroke="#111" stroke-opacity="0.6" stroke-width="1.5"/>
<path d="M63.9 681.8 V672 A10.9 9.9 0 1 1 74.8 681.8 Z" fill="#191a1a"/>
<path d="M74.8 666.1 L76.4 669.9 L80.2 671.5 L76.4 673.1 L74.8 676.9 L73.2 673.1 L69.4 671.5 L73.2 669.9 Z" fill="#e6e6e6"/>
</svg>
<span class="t" style="left:61.60px;top:349.48px;font-size:30.5px;line-height:30.5px;color:#e6e6e6;font-weight:700;letter-spacing:0.872px;text-shadow:0 0 2px #000,0 0 2px #000;">mapbox</span>
<div class="abs" style="left:810px;top:362px;width:530px;height:40px;background:rgba(255,255,255,0.5);"></div>
<span class="t" style="left:820.00px;top:369.98px;font-size:24px;line-height:24px;color:rgba(0,0,0,0.75);letter-spacing:0.227px;">© Mapbox © OpenStreetMap Improve this map</span>
</div>
</div></section>
<section class="panel" style="left:1418px;top:232px;"><div class="pc" style="left:-1418px;top:-232px;">
<span class="t" style="left:1443.00px;top:255.14px;font-size:27px;line-height:27px;color:#9db5ce;letter-spacing:0.578px;-webkit-text-stroke:0.3px #9db5ce;">Traffic Trend</span>
<svg width="2814" height="2254" viewBox="0 0 2814 2254" style="pointer-events:none"><line x1="1524" y1="327" x2="2762.5" y2="327" stroke="#3a4b6e" stroke-width="2"/><line x1="1524" y1="437" x2="2762.5" y2="437" stroke="#3a4b6e" stroke-width="2"/><line x1="1524" y1="547" x2="2762.5" y2="547" stroke="#3a4b6e" stroke-width="2"/><line x1="1588.5" y1="547" x2="1588.5" y2="557" stroke="#3a4b6e" stroke-width="2"/><line x1="1740.1" y1="547" x2="1740.1" y2="557" stroke="#3a4b6e" stroke-width="2"/><line x1="1891.7" y1="547" x2="1891.7" y2="557" stroke="#3a4b6e" stroke-width="2"/><line x1="2043.3" y1="547" x2="2043.3" y2="557" stroke="#3a4b6e" stroke-width="2"/><line x1="2194.9" y1="547" x2="2194.9" y2="557" stroke="#3a4b6e" stroke-width="2"/><line x1="2346.5" y1="547" x2="2346.5" y2="557" stroke="#3a4b6e" stroke-width="2"/><line x1="2498.1" y1="547" x2="2498.1" y2="557" stroke="#3a4b6e" stroke-width="2"/><line x1="2649.7" y1="547" x2="2649.7" y2="557" stroke="#3a4b6e" stroke-width="2"/><polyline points="1537.9,529.6 1550.5,499.1 1563.2,493.9 1575.8,488.7 1588.4,501.1 1601.1,495.9 1613.7,496.9 1626.3,495.4 1638.9,496.9 1651.6,491.7 1664.2,495.1 1676.8,492.9 1689.5,501.1 1702.1,498.8 1714.7,498.4 1727.4,495.0 1740.0,502.5 1752.6,492.9 1765.2,501.1 1777.9,493.6 1790.5,496.9 1803.1,497.6 1815.8,493.5 1828.4,496.9 1841.0,493.6 1853.7,497.6 1866.3,496.9 1878.9,499.1 1891.5,500.6 1904.2,504.8 1916.8,496.9 1929.4,497.6 1942.1,500.2 1954.7,496.5 1967.3,496.2 1980.0,492.9 1992.6,496.6 2005.2,500.6 2017.8,492.0 2030.5,494.4 2043.1,500.3 2055.7,503.6 2068.4,497.9 2081.0,493.2 2093.6,492.0 2106.2,496.2 2118.9,495.9 2131.5,500.9 2144.1,493.9 2156.8,495.1 2169.4,501.8 2182.0,497.3 2194.7,496.5 2207.3,494.4 2219.9,497.3 2232.6,497.9 2245.2,504.0 2257.8,491.0 2270.4,500.9 2283.1,496.2 2295.7,495.1 2308.3,501.8 2321.0,495.1 2333.6,496.2 2346.2,491.0 2358.9,494.4 2371.5,497.9 2384.1,493.2 2396.7,499.9 2409.4,495.9 2422.0,495.4 2434.6,496.9 2447.3,495.9 2459.9,492.0 2472.5,495.4 2485.2,498.8 2497.8,495.0 2510.4,496.6 2523.0,495.9 2535.7,495.4 2548.3,495.6 2560.9,500.9 2573.6,502.1 2586.2,494.7 2598.8,502.5 2611.4,498.8 2624.1,501.1 2636.7,497.3 2649.3,496.2 2662.0,496.2 2674.6,496.9 2687.2,499.9 2699.9,498.1 2712.5,500.6 2725.1,502.1 2737.8,495.9 2750.4,519.2" fill="none" stroke="#1a78b8" stroke-width="2.1" stroke-linejoin="round" stroke-linecap="butt"/><polyline points="1537.9,507.3 1550.5,436.8 1563.2,424.9 1575.8,411.1 1588.4,437.5 1601.1,424.6 1613.7,430.6 1626.3,429.4 1638.9,434.1 1651.6,423.1 1664.2,427.6 1676.8,419.0 1689.5,442.0 1702.1,431.3 1714.7,431.2 1727.4,430.9 1740.0,443.5 1752.6,417.9 1765.2,438.0 1777.9,421.2 1790.5,430.6 1803.1,433.8 1815.8,424.2 1828.4,432.8 1841.0,424.2 1853.7,436.0 1866.3,429.1 1878.9,432.3 1891.5,435.3 1904.2,446.0 1916.8,427.9 1929.4,435.8 1942.1,430.6 1954.7,426.8 1967.3,429.1 1980.0,420.2 1992.6,434.1 2005.2,442.7 2017.8,417.5 2030.5,423.1 2043.1,434.1 2055.7,445.3 2068.4,426.1 2081.0,421.9 2093.6,415.7 2106.2,427.1 2118.9,429.4 2131.5,437.8 2144.1,423.7 2156.8,427.1 2169.4,438.7 2182.0,429.1 2194.7,429.4 2207.3,423.7 2219.9,429.8 2232.6,430.6 2245.2,446.0 2257.8,418.7 2270.4,438.3 2283.1,426.0 2295.7,428.6 2308.3,439.8 2321.0,424.9 2333.6,429.1 2346.2,421.5 2358.9,426.4 2371.5,428.9 2384.1,421.9 2396.7,433.8 2409.4,429.4 2422.0,428.2 2434.6,430.9 2447.3,427.6 2459.9,418.2 2472.5,427.6 2485.2,433.1 2497.8,423.0 2510.4,426.1 2523.0,424.9 2535.7,426.4 2548.3,427.9 2560.9,438.0 2573.6,443.5 2586.2,426.1 2598.8,441.7 2611.4,434.1 2624.1,440.8 2636.7,424.6 2649.3,425.4 2662.0,436.5 2674.6,427.9 2687.2,434.9 2699.9,436.3 2712.5,439.3 2725.1,438.7 2737.8,426.4 2750.4,481.6" fill="none" stroke="#a9d6ec" stroke-width="2.1" stroke-linejoin="round" stroke-linecap="butt"/></svg>
<span class="t" style="left:1476.50px;top:314.68px;font-size:22px;line-height:22px;color:#dfe3e9;letter-spacing:0.514px;">10k</span><span class="t" style="left:1452.30px;top:424.18px;font-size:22px;line-height:22px;color:#dfe3e9;letter-spacing:1.411px;">5,000</span><span class="t" style="left:1500.76px;top:533.88px;font-size:22px;line-height:22px;color:#dfe3e9;">0</span>
<span class="t" style="left:1557.30px;top:554.18px;font-size:24px;line-height:24px;color:#dfe3e9;letter-spacing:0.235px;">03:00</span><span class="t" style="left:1557.30px;top:581.98px;font-size:24px;line-height:24px;color:#dfe3e9;letter-spacing:-0.502px;">AM</span><span class="t" style="left:1708.90px;top:554.18px;font-size:24px;line-height:24px;color:#dfe3e9;letter-spacing:0.235px;">06:00</span><span class="t" style="left:1708.90px;top:581.98px;font-size:24px;line-height:24px;color:#dfe3e9;letter-spacing:-0.502px;">AM</span><span class="t" style="left:1860.50px;top:554.18px;font-size:24px;line-height:24px;color:#dfe3e9;letter-spacing:0.235px;">09:00</span><span class="t" style="left:1860.50px;top:581.98px;font-size:24px;line-height:24px;color:#dfe3e9;letter-spacing:-0.502px;">AM</span><span class="t" style="left:2012.10px;top:554.18px;font-size:24px;line-height:24px;color:#dfe3e9;letter-spacing:-0.565px;">12:00</span><span class="t" style="left:2012.10px;top:581.98px;font-size:24px;line-height:24px;color:#dfe3e9;letter-spacing:-2.602px;">PM</span><span class="t" style="left:2163.70px;top:554.18px;font-size:24px;line-height:24px;color:#dfe3e9;letter-spacing:0.235px;">03:00</span><span class="t" style="left:2163.70px;top:581.98px;font-size:24px;line-height:24px;color:#dfe3e9;letter-spacing:-2.602px;">PM</span><span class="t" style="left:2315.30px;top:554.18px;font-size:24px;line-height:24px;color:#dfe3e9;letter-spacing:0.235px;">06:00</span><span class="t" style="left:2315.30px;top:581.98px;font-size:24px;line-height:24px;color:#dfe3e9;letter-spacing:-2.602px;">PM</span><span class="t" style="left:2466.90px;top:554.18px;font-size:24px;line-height:24px;color:#dfe3e9;letter-spacing:0.235px;">09:00</span><span class="t" style="left:2466.90px;top:581.98px;font-size:24px;line-height:24px;color:#dfe3e9;letter-spacing:-2.602px;">PM</span><span class="t" style="left:2612.20px;top:554.18px;font-size:24px;line-height:24px;color:#dfe3e9;letter-spacing:-0.565px;">12:00</span><span class="t" style="left:2612.20px;top:581.98px;font-size:24px;line-height:24px;color:#dfe3e9;letter-spacing:-0.941px;">AM 21</span><span class="t" style="left:2612.20px;top:609.78px;font-size:24px;line-height:24px;color:#dfe3e9;letter-spacing:-0.994px;">Aug 21</span>
<div class="abs" style="left:1452.2px;top:668px;width:20px;height:20px;border-radius:50%;background:#a9d6ec;"></div><span class="t" style="left:1483.30px;top:667.68px;font-size:24px;line-height:24px;color:#dcdfe4;letter-spacing:-0.158px;">Allowed</span><div class="abs" style="left:1586px;top:668px;width:20px;height:20px;border-radius:50%;background:#1a78b8;"></div><span class="t" style="left:1617.00px;top:667.68px;font-size:24px;line-height:24px;color:#dcdfe4;letter-spacing:-0.381px;">Blocked</span>
</div></section>
<section class="panel" style="left:14px;top:748px;"><div class="pc" style="left:-14px;top:-748px;">
<span class="t" style="left:39.00px;top:771.14px;font-size:27px;line-height:27px;color:#9db5ce;letter-spacing:0.489px;-webkit-text-stroke:0.3px #9db5ce;">IP Count</span>
<svg width="2814" height="2254" viewBox="0 0 2814 2254"><line x1="120" y1="843" x2="1358.5" y2="843" stroke="#3a4b6e" stroke-width="2"/><line x1="120" y1="953" x2="1358.5" y2="953" stroke="#3a4b6e" stroke-width="2"/><line x1="120" y1="1063" x2="1358.5" y2="1063" stroke="#3a4b6e" stroke-width="2"/><line x1="185.1" y1="1063" x2="185.1" y2="1073" stroke="#3a4b6e" stroke-width="2"/><line x1="336.6" y1="1063" x2="336.6" y2="1073" stroke="#3a4b6e" stroke-width="2"/><line x1="488.1" y1="1063" x2="488.1" y2="1073" stroke="#3a4b6e" stroke-width="2"/><line x1="639.6" y1="1063" x2="639.6" y2="1073" stroke="#3a4b6e" stroke-width="2"/><line x1="791.1" y1="1063" x2="791.1" y2="1073" stroke="#3a4b6e" stroke-width="2"/><line x1="942.6" y1="1063" x2="942.6" y2="1073" stroke="#3a4b6e" stroke-width="2"/><line x1="1094.1" y1="1063" x2="1094.1" y2="1073" stroke="#3a4b6e" stroke-width="2"/><line x1="1245.6" y1="1063" x2="1245.6" y2="1073" stroke="#3a4b6e" stroke-width="2"/><polyline points="134.1,1055.9 146.7,1042.2 159.4,1040.0 172.0,1037.8 184.6,1043.0 197.2,1040.6 209.9,1041.8 222.5,1040.3 235.1,1041.8 247.8,1039.3 260.4,1041.3 273.0,1040.0 285.7,1043.7 298.3,1041.5 310.9,1041.8 323.6,1040.0 336.2,1043.6 348.8,1040.7 361.4,1043.0 374.1,1039.3 386.7,1041.5 399.3,1041.8 412.0,1039.6 424.6,1041.5 437.2,1040.0 449.9,1041.3 462.5,1042.1 475.1,1043.0 487.7,1043.3 500.4,1044.7 513.0,1041.0 525.6,1041.5 538.3,1042.8 550.9,1041.3 563.5,1040.0 576.1,1040.0 588.8,1041.3 601.4,1043.0 614.0,1038.8 626.7,1040.3 639.3,1042.8 651.9,1044.3 664.6,1042.2 677.2,1040.3 689.8,1040.0 702.5,1041.5 715.1,1040.6 727.7,1043.3 740.3,1040.3 753.0,1040.6 765.6,1043.3 778.2,1041.3 790.9,1041.0 803.5,1040.3 816.1,1041.8 828.8,1041.5 841.4,1044.7 854.0,1040.0 866.6,1043.7 879.3,1041.8 891.9,1040.3 904.5,1043.3 917.2,1041.0 929.8,1040.6 942.4,1038.4 955.1,1040.0 967.7,1042.1 980.3,1040.0 992.9,1042.5 1005.6,1041.0 1018.2,1040.7 1030.8,1041.8 1043.5,1040.7 1056.1,1039.1 1068.7,1041.5 1081.4,1042.8 1094.0,1040.3 1106.6,1040.6 1119.2,1040.6 1131.9,1040.6 1144.5,1040.7 1157.1,1043.7 1169.8,1043.0 1182.4,1040.6 1195.0,1044.0 1207.6,1042.1 1220.3,1043.0 1232.9,1041.8 1245.5,1040.3 1258.2,1041.8 1270.8,1041.3 1283.4,1042.8 1296.1,1042.8 1308.7,1044.0 1321.3,1043.3 1334.0,1040.3 1346.6,1051.1" fill="none" stroke="#1a78b8" stroke-width="2.1" stroke-linejoin="round" stroke-linecap="butt"/><polyline points="134.1,1013.6 146.7,926.0 159.4,910.4 172.0,893.8 184.6,927.8 197.2,911.5 209.9,917.4 222.5,917.1 235.1,921.1 247.8,907.5 260.4,913.8 273.0,904.0 285.7,931.9 298.3,920.8 310.9,920.1 323.6,917.8 336.2,934.6 348.8,902.0 361.4,928.7 374.1,907.9 386.7,918.6 399.3,922.0 412.0,910.4 424.6,920.1 437.2,910.4 449.9,925.0 462.5,916.1 475.1,920.4 487.7,924.5 500.4,937.9 513.0,916.1 525.6,924.1 538.3,919.3 550.9,913.8 563.5,916.8 576.1,904.9 588.8,920.8 601.4,932.7 614.0,902.7 626.7,909.7 639.3,923.0 651.9,936.7 664.6,913.4 677.2,907.5 689.8,899.3 702.5,913.4 715.1,916.1 727.7,927.5 740.3,910.1 753.0,914.1 765.6,930.0 778.2,916.8 790.9,916.4 803.5,910.4 816.1,918.3 828.8,919.8 841.4,937.6 854.0,901.8 866.6,927.9 879.3,911.9 891.9,915.2 904.5,930.2 917.2,910.9 929.8,916.4 942.4,906.4 955.1,912.9 967.7,916.1 980.3,907.9 992.9,923.0 1005.6,915.9 1018.2,914.9 1030.8,918.3 1043.5,915.2 1056.1,903.3 1068.7,912.9 1081.4,921.6 1094.0,910.1 1106.6,913.8 1119.2,912.4 1131.9,913.4 1144.5,915.2 1157.1,927.8 1169.8,934.9 1182.4,911.9 1195.0,931.9 1207.6,923.0 1220.3,930.8 1232.9,911.9 1245.5,913.4 1258.2,923.0 1270.8,916.1 1283.4,924.1 1296.1,924.2 1308.7,927.5 1321.3,929.7 1334.0,914.9 1346.6,982.4" fill="none" stroke="#a9d6ec" stroke-width="2.1" stroke-linejoin="round" stroke-linecap="butt"/></svg>
<span class="t" style="left:72.50px;top:830.68px;font-size:22px;line-height:22px;color:#dfe3e9;letter-spacing:0.514px;">10k</span><span class="t" style="left:48.30px;top:940.18px;font-size:22px;line-height:22px;color:#dfe3e9;letter-spacing:1.411px;">5,000</span><span class="t" style="left:96.76px;top:1049.88px;font-size:22px;line-height:22px;color:#dfe3e9;">0</span>
<span class="t" style="left:153.90px;top:1070.18px;font-size:24px;line-height:24px;color:#dfe3e9;letter-spacing:0.235px;">03:00</span><span class="t" style="left:153.90px;top:1097.98px;font-size:24px;line-height:24px;color:#dfe3e9;letter-spacing:-0.502px;">AM</span><span class="t" style="left:305.40px;top:1070.18px;font-size:24px;line-height:24px;color:#dfe3e9;letter-spacing:0.235px;">06:00</span><span class="t" style="left:305.40px;top:1097.98px;font-size:24px;line-height:24px;color:#dfe3e9;letter-spacing:-0.502px;">AM</span><span class="t" style="left:456.90px;top:1070.18px;font-size:24px;line-height:24px;color:#dfe3e9;letter-spacing:0.235px;">09:00</span><span class="t" style="left:456.90px;top:1097.98px;font-size:24px;line-height:24px;color:#dfe3e9;letter-spacing:-0.502px;">AM</span><span class="t" style="left:608.40px;top:1070.18px;font-size:24px;line-height:24px;color:#dfe3e9;letter-spacing:-0.565px;">12:00</span><span class="t" style="left:608.40px;top:1097.98px;font-size:24px;line-height:24px;color:#dfe3e9;letter-spacing:-2.602px;">PM</span><span class="t" style="left:759.90px;top:1070.18px;font-size:24px;line-height:24px;color:#dfe3e9;letter-spacing:0.235px;">03:00</span><span class="t" style="left:759.90px;top:1097.98px;font-size:24px;line-height:24px;color:#dfe3e9;letter-spacing:-2.602px;">PM</span><span class="t" style="left:911.40px;top:1070.18px;font-size:24px;line-height:24px;color:#dfe3e9;letter-spacing:0.235px;">06:00</span><span class="t" style="left:911.40px;top:1097.98px;font-size:24px;line-height:24px;color:#dfe3e9;letter-spacing:-2.602px;">PM</span><span class="t" style="left:1062.90px;top:1070.18px;font-size:24px;line-height:24px;color:#dfe3e9;letter-spacing:0.235px;">09:00</span><span class="t" style="left:1062.90px;top:1097.98px;font-size:24px;line-height:24px;color:#dfe3e9;letter-spacing:-2.602px;">PM</span><span class="t" style="left:1208.10px;top:1070.18px;font-size:24px;line-height:24px;color:#dfe3e9;letter-spacing:-0.565px;">12:00</span><span class="t" style="left:1208.10px;top:1097.98px;font-size:24px;line-height:24px;color:#dfe3e9;letter-spacing:-0.941px;">AM 21</span><span class="t" style="left:1208.10px;top:1125.78px;font-size:24px;line-height:24px;color:#dfe3e9;letter-spacing:-0.994px;">Aug 21</span>
<div class="abs" style="left:47.8px;top:1184px;width:20px;height:20px;border-radius:50%;background:#1a78b8;"></div><span class="t" style="left:79.00px;top:1183.68px;font-size:24px;line-height:24px;color:#dcdfe4;letter-spacing:-1.302px;">GROUP</span><div class="abs" style="left:182px;top:1184px;width:20px;height:20px;border-radius:50%;background:#a9d6ec;"></div><span class="t" style="left:212.70px;top:1183.68px;font-size:24px;line-height:24px;color:#dcdfe4;letter-spacing:-1.172px;">REGULAR</span>
</div></section>
<section class="panel" style="left:1418px;top:748px;"><div class="pc" style="left:-1418px;top:-748px;">
<span class="t" style="left:1443.00px;top:771.14px;font-size:27px;line-height:27px;color:#9db5ce;letter-spacing:0.500px;-webkit-text-stroke:0.3px #9db5ce;">URI Hits</span>
<div class="tbl" style="left:1442px;top:822px;width:1340px;height:402px;overflow:hidden;"><div class="th" style="width:1336px;"></div><div class="abs" style="left:1316px;top:54px;width:20px;height:344px;background:#1b2540;"></div><div class="abs" style="left:1320.3px;top:56px;width:12px;height:80px;border-radius:6px;background:#2b4d6f;"></div><div class="tr" style="top:54px;width:1316px;"></div><div class="tr" style="top:108px;width:1316px;"></div><div class="tr" style="top:162px;width:1316px;"></div><div class="tr" style="top:216px;width:1316px;"></div><div class="tr" style="top:270px;width:1316px;"></div><div class="tr" style="top:324px;width:1316px;"></div><div class="tr" style="top:378px;width:1316px;"></div></div><span class="t" style="left:1506.30px;top:838.08px;font-size:24px;line-height:24px;color:#8ea6c0;letter-spacing:-0.587px;">uri</span><span class="t" style="left:2675.00px;top:838.08px;font-size:24px;line-height:24px;color:#8ea6c0;letter-spacing:0.072px;">count</span><span class="t" style="left:1468.13px;top:891.88px;font-size:24px;line-height:24px;color:#8ea6c0;">1</span><span class="t" style="left:1506.30px;top:891.88px;font-size:24px;line-height:24px;color:#eef1f5;letter-spacing:0.275px;">/shopping/cart/checkout.jsp</span><span class="t" style="left:2661.19px;top:894.58px;font-size:23px;line-height:23px;color:#eef1f5;font-family:'Liberation Mono', monospace;">87,170</span><span class="t" style="left:1468.13px;top:945.88px;font-size:24px;line-height:24px;color:#8ea6c0;">2</span><span class="t" style="left:1506.30px;top:945.88px;font-size:24px;line-height:24px;color:#eef1f5;letter-spacing:0.304px;">/_js/master.js</span><span class="t" style="left:2661.19px;top:948.58px;font-size:23px;line-height:23px;color:#eef1f5;font-family:'Liberation Mono', monospace;">54,673</span><span class="t" style="left:1468.13px;top:999.88px;font-size:24px;line-height:24px;color:#8ea6c0;">3</span><span class="t" style="left:1506.30px;top:999.88px;font-size:24px;line-height:24px;color:#eef1f5;letter-spacing:0.154px;">/_media/resource_thumb_video_cloud_based.jpg</span><span class="t" style="left:2661.19px;top:1002.58px;font-size:23px;line-height:23px;color:#eef1f5;font-family:'Liberation Mono', monospace;">45,807</span><span class="t" style="left:1468.13px;top:1053.88px;font-size:24px;line-height:24px;color:#8ea6c0;">4</span><span class="t" style="left:1506.30px;top:1053.88px;font-size:24px;line-height:24px;color:#eef1f5;letter-spacing:0.390px;">/_media/bio_nir.jpg</span><span class="t" style="left:2661.19px;top:1056.58px;font-size:23px;line-height:23px;color:#eef1f5;font-family:'Liberation Mono', monospace;">42,869</span><span class="t" style="left:1468.13px;top:1107.88px;font-size:24px;line-height:24px;color:#8ea6c0;">5</span><span class="t" style="left:1506.30px;top:1107.88px;font-size:24px;line-height:24px;color:#eef1f5;letter-spacing:0.114px;">/_media/company_logo.png</span><span class="t" style="left:2661.19px;top:1110.58px;font-size:23px;line-height:23px;color:#eef1f5;font-family:'Liberation Mono', monospace;">36,469</span><span class="t" style="left:1468.13px;top:1161.88px;font-size:24px;line-height:24px;color:#8ea6c0;">6</span><span class="t" style="left:1506.30px;top:1161.88px;font-size:24px;line-height:24px;color:#eef1f5;letter-spacing:0.371px;">/_includes/wp/blog/wp-content/plugins/us/31063765-bpfull.phpi?&amp;w=50&amp;id=6&amp;random=1331063765</span><span class="t" style="left:2661.19px;top:1164.58px;font-size:23px;line-height:23px;color:#eef1f5;font-family:'Liberation Mono', monospace;">34,561</span><span class="t" style="left:1468.13px;top:1215.88px;font-size:24px;line-height:24px;color:#8ea6c0;clip-path:inset(0 0 17.9px 0);">7</span><span class="t" style="left:1506.30px;top:1215.88px;font-size:24px;line-height:24px;color:#eef1f5;letter-spacing:1.066px;clip-path:inset(0 0 17.9px 0);">/testimonials/refurbished.do/</span><span class="t" style="left:2661.19px;top:1218.58px;font-size:23px;line-height:23px;color:#eef1f5;font-family:'Liberation Mono', monospace;clip-path:inset(0 0 19.6px 0);">31,197</span>
</div></section>
<section class="panel" style="left:14px;top:1264px;"><div class="pc" style="left:-14px;top:-1264px;">
<span class="t" style="left:39.00px;top:1287.14px;font-size:27px;line-height:27px;color:#9db5ce;letter-spacing:0.385px;-webkit-text-stroke:0.3px #9db5ce;">All Traffic by Rule Type</span>
<svg width="2814" height="2254" viewBox="0 0 2814 2254"><line x1="120" y1="1359" x2="1358.5" y2="1359" stroke="#3a4b6e" stroke-width="2"/><line x1="120" y1="1469" x2="1358.5" y2="1469" stroke="#3a4b6e" stroke-width="2"/><line x1="120" y1="1579" x2="1358.5" y2="1579" stroke="#3a4b6e" stroke-width="2"/><line x1="187.5" y1="1579" x2="187.5" y2="1589" stroke="#3a4b6e" stroke-width="2"/><line x1="337.6" y1="1579" x2="337.6" y2="1589" stroke="#3a4b6e" stroke-width="2"/><line x1="487.7" y1="1579" x2="487.7" y2="1589" stroke="#3a4b6e" stroke-width="2"/><line x1="637.8" y1="1579" x2="637.8" y2="1589" stroke="#3a4b6e" stroke-width="2"/><line x1="787.9" y1="1579" x2="787.9" y2="1589" stroke="#3a4b6e" stroke-width="2"/><line x1="938.0" y1="1579" x2="938.0" y2="1589" stroke="#3a4b6e" stroke-width="2"/><line x1="1088.1" y1="1579" x2="1088.1" y2="1589" stroke="#3a4b6e" stroke-width="2"/><line x1="1238.2" y1="1579" x2="1238.2" y2="1589" stroke="#3a4b6e" stroke-width="2"/><rect x="132" y="1572.5" width="4" height="5.5" fill="#1a78b8"/><rect x="136" y="1530.2" width="4" height="47.8" fill="#a9d6ec"/><rect x="144" y="1558.8" width="4" height="19.2" fill="#1a78b8"/><rect x="148" y="1442.6" width="4" height="135.4" fill="#a9d6ec"/><rect x="158" y="1556.6" width="4" height="21.4" fill="#1a78b8"/><rect x="162" y="1427.0" width="4" height="151.0" fill="#a9d6ec"/><rect x="170" y="1554.4" width="4" height="23.6" fill="#1a78b8"/><rect x="174" y="1410.4" width="4" height="167.6" fill="#a9d6ec"/><rect x="182" y="1559.6" width="4" height="18.4" fill="#1a78b8"/><rect x="186" y="1444.4" width="4" height="133.6" fill="#a9d6ec"/><rect x="194" y="1557.2" width="4" height="20.8" fill="#1a78b8"/><rect x="198" y="1428.1" width="4" height="149.9" fill="#a9d6ec"/><rect x="208" y="1558.4" width="4" height="19.6" fill="#1a78b8"/><rect x="212" y="1434.0" width="4" height="144.0" fill="#a9d6ec"/><rect x="220" y="1556.9" width="4" height="21.1" fill="#1a78b8"/><rect x="224" y="1433.7" width="4" height="144.3" fill="#a9d6ec"/><rect x="232" y="1558.4" width="4" height="19.6" fill="#1a78b8"/><rect x="236" y="1437.7" width="4" height="140.3" fill="#a9d6ec"/><rect x="244" y="1555.9" width="4" height="22.1" fill="#1a78b8"/><rect x="248" y="1424.1" width="4" height="153.9" fill="#a9d6ec"/><rect x="258" y="1557.9" width="4" height="20.1" fill="#1a78b8"/><rect x="262" y="1430.4" width="4" height="147.6" fill="#a9d6ec"/><rect x="270" y="1556.6" width="4" height="21.4" fill="#1a78b8"/><rect x="274" y="1420.6" width="4" height="157.4" fill="#a9d6ec"/><rect x="282" y="1560.3" width="4" height="17.7" fill="#1a78b8"/><rect x="286" y="1448.5" width="4" height="129.5" fill="#a9d6ec"/><rect x="296" y="1558.1" width="4" height="19.9" fill="#1a78b8"/><rect x="300" y="1437.4" width="4" height="140.6" fill="#a9d6ec"/><rect x="308" y="1558.4" width="4" height="19.6" fill="#1a78b8"/><rect x="312" y="1436.7" width="4" height="141.3" fill="#a9d6ec"/><rect x="320" y="1556.6" width="4" height="21.4" fill="#1a78b8"/><rect x="324" y="1434.4" width="4" height="143.6" fill="#a9d6ec"/><rect x="332" y="1560.2" width="4" height="17.8" fill="#1a78b8"/><rect x="336" y="1451.2" width="4" height="126.8" fill="#a9d6ec"/><rect x="346" y="1557.3" width="4" height="20.7" fill="#1a78b8"/><rect x="350" y="1418.6" width="4" height="159.4" fill="#a9d6ec"/><rect x="358" y="1559.6" width="4" height="18.4" fill="#1a78b8"/><rect x="362" y="1445.3" width="4" height="132.7" fill="#a9d6ec"/><rect x="370" y="1555.9" width="4" height="22.1" fill="#1a78b8"/><rect x="374" y="1424.5" width="4" height="153.5" fill="#a9d6ec"/><rect x="382" y="1558.1" width="4" height="19.9" fill="#1a78b8"/><rect x="386" y="1435.2" width="4" height="142.8" fill="#a9d6ec"/><rect x="396" y="1558.4" width="4" height="19.6" fill="#1a78b8"/><rect x="400" y="1438.6" width="4" height="139.4" fill="#a9d6ec"/><rect x="408" y="1556.2" width="4" height="21.8" fill="#1a78b8"/><rect x="412" y="1427.0" width="4" height="151.0" fill="#a9d6ec"/><rect x="420" y="1558.1" width="4" height="19.9" fill="#1a78b8"/><rect x="424" y="1436.7" width="4" height="141.3" fill="#a9d6ec"/><rect x="434" y="1556.6" width="4" height="21.4" fill="#1a78b8"/><rect x="438" y="1427.0" width="4" height="151.0" fill="#a9d6ec"/><rect x="446" y="1557.9" width="4" height="20.1" fill="#1a78b8"/><rect x="450" y="1441.6" width="4" height="136.4" fill="#a9d6ec"/><rect x="458" y="1558.7" width="4" height="19.3" fill="#1a78b8"/><rect x="462" y="1432.7" width="4" height="145.3" fill="#a9d6ec"/><rect x="470" y="1559.6" width="4" height="18.4" fill="#1a78b8"/><rect x="474" y="1437.0" width="4" height="141.0" fill="#a9d6ec"/><rect x="484" y="1559.9" width="4" height="18.1" fill="#1a78b8"/><rect x="488" y="1441.1" width="4" height="136.9" fill="#a9d6ec"/><rect x="496" y="1561.3" width="4" height="16.7" fill="#1a78b8"/><rect x="500" y="1454.5" width="4" height="123.5" fill="#a9d6ec"/><rect x="508" y="1557.6" width="4" height="20.4" fill="#1a78b8"/><rect x="512" y="1432.7" width="4" height="145.3" fill="#a9d6ec"/><rect x="520" y="1558.1" width="4" height="19.9" fill="#1a78b8"/><rect x="524" y="1440.7" width="4" height="137.3" fill="#a9d6ec"/><rect x="534" y="1559.4" width="4" height="18.6" fill="#1a78b8"/><rect x="538" y="1435.9" width="4" height="142.1" fill="#a9d6ec"/><rect x="546" y="1557.9" width="4" height="20.1" fill="#1a78b8"/><rect x="550" y="1430.4" width="4" height="147.6" fill="#a9d6ec"/><rect x="558" y="1556.6" width="4" height="21.4" fill="#1a78b8"/><rect x="562" y="1433.4" width="4" height="144.6" fill="#a9d6ec"/><rect x="570" y="1556.6" width="4" height="21.4" fill="#1a78b8"/><rect x="574" y="1421.5" width="4" height="156.5" fill="#a9d6ec"/><rect x="584" y="1557.9" width="4" height="20.1" fill="#1a78b8"/><rect x="588" y="1437.4" width="4" height="140.6" fill="#a9d6ec"/><rect x="596" y="1559.6" width="4" height="18.4" fill="#1a78b8"/><rect x="600" y="1449.3" width="4" height="128.7" fill="#a9d6ec"/><rect x="608" y="1555.4" width="4" height="22.6" fill="#1a78b8"/><rect x="612" y="1419.3" width="4" height="158.7" fill="#a9d6ec"/><rect x="622" y="1556.9" width="4" height="21.1" fill="#1a78b8"/><rect x="626" y="1426.3" width="4" height="151.7" fill="#a9d6ec"/><rect x="634" y="1559.4" width="4" height="18.6" fill="#1a78b8"/><rect x="638" y="1439.6" width="4" height="138.4" fill="#a9d6ec"/><rect x="646" y="1560.9" width="4" height="17.1" fill="#1a78b8"/><rect x="650" y="1453.3" width="4" height="124.7" fill="#a9d6ec"/><rect x="658" y="1558.8" width="4" height="19.2" fill="#1a78b8"/><rect x="662" y="1430.0" width="4" height="148.0" fill="#a9d6ec"/><rect x="672" y="1556.9" width="4" height="21.1" fill="#1a78b8"/><rect x="676" y="1424.1" width="4" height="153.9" fill="#a9d6ec"/><rect x="684" y="1556.6" width="4" height="21.4" fill="#1a78b8"/><rect x="688" y="1415.9" width="4" height="162.1" fill="#a9d6ec"/><rect x="696" y="1558.1" width="4" height="19.9" fill="#1a78b8"/><rect x="700" y="1430.0" width="4" height="148.0" fill="#a9d6ec"/><rect x="708" y="1557.2" width="4" height="20.8" fill="#1a78b8"/><rect x="712" y="1432.7" width="4" height="145.3" fill="#a9d6ec"/><rect x="722" y="1559.9" width="4" height="18.1" fill="#1a78b8"/><rect x="726" y="1444.1" width="4" height="133.9" fill="#a9d6ec"/><rect x="734" y="1556.9" width="4" height="21.1" fill="#1a78b8"/><rect x="738" y="1426.7" width="4" height="151.3" fill="#a9d6ec"/><rect x="746" y="1557.2" width="4" height="20.8" fill="#1a78b8"/><rect x="750" y="1430.7" width="4" height="147.3" fill="#a9d6ec"/><rect x="760" y="1559.9" width="4" height="18.1" fill="#1a78b8"/><rect x="764" y="1446.6" width="4" height="131.4" fill="#a9d6ec"/><rect x="772" y="1557.9" width="4" height="20.1" fill="#1a78b8"/><rect x="776" y="1433.4" width="4" height="144.6" fill="#a9d6ec"/><rect x="784" y="1557.6" width="4" height="20.4" fill="#1a78b8"/><rect x="788" y="1433.0" width="4" height="145.0" fill="#a9d6ec"/><rect x="796" y="1556.9" width="4" height="21.1" fill="#1a78b8"/><rect x="800" y="1427.0" width="4" height="151.0" fill="#a9d6ec"/><rect x="810" y="1558.4" width="4" height="19.6" fill="#1a78b8"/><rect x="814" y="1434.9" width="4" height="143.1" fill="#a9d6ec"/><rect x="822" y="1558.1" width="4" height="19.9" fill="#1a78b8"/><rect x="826" y="1436.4" width="4" height="141.6" fill="#a9d6ec"/><rect x="834" y="1561.3" width="4" height="16.7" fill="#1a78b8"/><rect x="838" y="1454.2" width="4" height="123.8" fill="#a9d6ec"/><rect x="846" y="1556.6" width="4" height="21.4" fill="#1a78b8"/><rect x="850" y="1418.4" width="4" height="159.6" fill="#a9d6ec"/><rect x="860" y="1560.3" width="4" height="17.7" fill="#1a78b8"/><rect x="864" y="1444.5" width="4" height="133.5" fill="#a9d6ec"/><rect x="872" y="1558.4" width="4" height="19.6" fill="#1a78b8"/><rect x="876" y="1428.5" width="4" height="149.5" fill="#a9d6ec"/><rect x="884" y="1556.9" width="4" height="21.1" fill="#1a78b8"/><rect x="888" y="1431.8" width="4" height="146.2" fill="#a9d6ec"/><rect x="898" y="1559.9" width="4" height="18.1" fill="#1a78b8"/><rect x="902" y="1446.8" width="4" height="131.2" fill="#a9d6ec"/><rect x="910" y="1557.6" width="4" height="20.4" fill="#1a78b8"/><rect x="914" y="1427.5" width="4" height="150.5" fill="#a9d6ec"/><rect x="922" y="1557.2" width="4" height="20.8" fill="#1a78b8"/><rect x="926" y="1433.0" width="4" height="145.0" fill="#a9d6ec"/><rect x="934" y="1555.0" width="4" height="23.0" fill="#1a78b8"/><rect x="938" y="1423.0" width="4" height="155.0" fill="#a9d6ec"/><rect x="948" y="1556.6" width="4" height="21.4" fill="#1a78b8"/><rect x="952" y="1429.5" width="4" height="148.5" fill="#a9d6ec"/><rect x="960" y="1558.7" width="4" height="19.3" fill="#1a78b8"/><rect x="964" y="1432.7" width="4" height="145.3" fill="#a9d6ec"/><rect x="972" y="1556.6" width="4" height="21.4" fill="#1a78b8"/><rect x="976" y="1424.5" width="4" height="153.5" fill="#a9d6ec"/><rect x="984" y="1559.1" width="4" height="18.9" fill="#1a78b8"/><rect x="988" y="1439.6" width="4" height="138.4" fill="#a9d6ec"/><rect x="998" y="1557.6" width="4" height="20.4" fill="#1a78b8"/><rect x="1002" y="1432.5" width="4" height="145.5" fill="#a9d6ec"/><rect x="1010" y="1557.3" width="4" height="20.7" fill="#1a78b8"/><rect x="1014" y="1431.5" width="4" height="146.5" fill="#a9d6ec"/><rect x="1022" y="1558.4" width="4" height="19.6" fill="#1a78b8"/><rect x="1026" y="1434.9" width="4" height="143.1" fill="#a9d6ec"/><rect x="1036" y="1557.3" width="4" height="20.7" fill="#1a78b8"/><rect x="1040" y="1431.8" width="4" height="146.2" fill="#a9d6ec"/><rect x="1048" y="1555.7" width="4" height="22.3" fill="#1a78b8"/><rect x="1052" y="1419.9" width="4" height="158.1" fill="#a9d6ec"/><rect x="1060" y="1558.1" width="4" height="19.9" fill="#1a78b8"/><rect x="1064" y="1429.5" width="4" height="148.5" fill="#a9d6ec"/><rect x="1072" y="1559.4" width="4" height="18.6" fill="#1a78b8"/><rect x="1076" y="1438.2" width="4" height="139.8" fill="#a9d6ec"/><rect x="1086" y="1556.9" width="4" height="21.1" fill="#1a78b8"/><rect x="1090" y="1426.7" width="4" height="151.3" fill="#a9d6ec"/><rect x="1098" y="1557.2" width="4" height="20.8" fill="#1a78b8"/><rect x="1102" y="1430.4" width="4" height="147.6" fill="#a9d6ec"/><rect x="1110" y="1557.2" width="4" height="20.8" fill="#1a78b8"/><rect x="1114" y="1429.0" width="4" height="149.0" fill="#a9d6ec"/><rect x="1122" y="1557.2" width="4" height="20.8" fill="#1a78b8"/><rect x="1126" y="1430.0" width="4" height="148.0" fill="#a9d6ec"/><rect x="1136" y="1557.3" width="4" height="20.7" fill="#1a78b8"/><rect x="1140" y="1431.8" width="4" height="146.2" fill="#a9d6ec"/><rect x="1148" y="1560.3" width="4" height="17.7" fill="#1a78b8"/><rect x="1152" y="1444.4" width="4" height="133.6" fill="#a9d6ec"/><rect x="1160" y="1559.6" width="4" height="18.4" fill="#1a78b8"/><rect x="1164" y="1451.5" width="4" height="126.5" fill="#a9d6ec"/><rect x="1172" y="1557.2" width="4" height="20.8" fill="#1a78b8"/><rect x="1176" y="1428.5" width="4" height="149.5" fill="#a9d6ec"/><rect x="1186" y="1560.6" width="4" height="17.4" fill="#1a78b8"/><rect x="1190" y="1448.5" width="4" height="129.5" fill="#a9d6ec"/><rect x="1198" y="1558.7" width="4" height="19.3" fill="#1a78b8"/><rect x="1202" y="1439.6" width="4" height="138.4" fill="#a9d6ec"/><rect x="1210" y="1559.6" width="4" height="18.4" fill="#1a78b8"/><rect x="1214" y="1447.4" width="4" height="130.6" fill="#a9d6ec"/><rect x="1224" y="1558.4" width="4" height="19.6" fill="#1a78b8"/><rect x="1228" y="1428.5" width="4" height="149.5" fill="#a9d6ec"/><rect x="1236" y="1556.9" width="4" height="21.1" fill="#1a78b8"/><rect x="1240" y="1430.0" width="4" height="148.0" fill="#a9d6ec"/><rect x="1248" y="1558.4" width="4" height="19.6" fill="#1a78b8"/><rect x="1252" y="1439.6" width="4" height="138.4" fill="#a9d6ec"/><rect x="1260" y="1557.9" width="4" height="20.1" fill="#1a78b8"/><rect x="1264" y="1432.7" width="4" height="145.3" fill="#a9d6ec"/><rect x="1274" y="1559.4" width="4" height="18.6" fill="#1a78b8"/><rect x="1278" y="1440.7" width="4" height="137.3" fill="#a9d6ec"/><rect x="1286" y="1559.4" width="4" height="18.6" fill="#1a78b8"/><rect x="1290" y="1440.8" width="4" height="137.2" fill="#a9d6ec"/><rect x="1298" y="1560.6" width="4" height="17.4" fill="#1a78b8"/><rect x="1302" y="1444.1" width="4" height="133.9" fill="#a9d6ec"/><rect x="1310" y="1559.9" width="4" height="18.1" fill="#1a78b8"/><rect x="1314" y="1446.3" width="4" height="131.7" fill="#a9d6ec"/><rect x="1324" y="1556.9" width="4" height="21.1" fill="#1a78b8"/><rect x="1328" y="1431.5" width="4" height="146.5" fill="#a9d6ec"/><rect x="1336" y="1567.7" width="4" height="10.3" fill="#1a78b8"/><rect x="1340" y="1499.0" width="4" height="79.0" fill="#a9d6ec"/></svg>
<span class="t" style="left:72.50px;top:1346.68px;font-size:22px;line-height:22px;color:#dfe3e9;letter-spacing:0.514px;">10k</span><span class="t" style="left:48.30px;top:1456.18px;font-size:22px;line-height:22px;color:#dfe3e9;letter-spacing:1.411px;">5,000</span><span class="t" style="left:96.76px;top:1565.88px;font-size:22px;line-height:22px;color:#dfe3e9;">0</span>
<span class="t" style="left:156.30px;top:1586.18px;font-size:24px;line-height:24px;color:#dfe3e9;letter-spacing:0.235px;">03:00</span><span class="t" style="left:156.30px;top:1613.98px;font-size:24px;line-height:24px;color:#dfe3e9;letter-spacing:-0.502px;">AM</span><span class="t" style="left:306.40px;top:1586.18px;font-size:24px;line-height:24px;color:#dfe3e9;letter-spacing:0.235px;">06:00</span><span class="t" style="left:306.40px;top:1613.98px;font-size:24px;line-height:24px;color:#dfe3e9;letter-spacing:-0.502px;">AM</span><span class="t" style="left:456.50px;top:1586.18px;font-size:24px;line-height:24px;color:#dfe3e9;letter-spacing:0.235px;">09:00</span><span class="t" style="left:456.50px;top:1613.98px;font-size:24px;line-height:24px;color:#dfe3e9;letter-spacing:-0.502px;">AM</span><span class="t" style="left:606.60px;top:1586.18px;font-size:24px;line-height:24px;color:#dfe3e9;letter-spacing:-0.565px;">12:00</span><span class="t" style="left:606.60px;top:1613.98px;font-size:24px;line-height:24px;color:#dfe3e9;letter-spacing:-2.602px;">PM</span><span class="t" style="left:756.70px;top:1586.18px;font-size:24px;line-height:24px;color:#dfe3e9;letter-spacing:0.235px;">03:00</span><span class="t" style="left:756.70px;top:1613.98px;font-size:24px;line-height:24px;color:#dfe3e9;letter-spacing:-2.602px;">PM</span><span class="t" style="left:906.80px;top:1586.18px;font-size:24px;line-height:24px;color:#dfe3e9;letter-spacing:0.235px;">06:00</span><span class="t" style="left:906.80px;top:1613.98px;font-size:24px;line-height:24px;color:#dfe3e9;letter-spacing:-2.602px;">PM</span><span class="t" style="left:1056.90px;top:1586.18px;font-size:24px;line-height:24px;color:#dfe3e9;letter-spacing:0.235px;">09:00</span><span class="t" style="left:1056.90px;top:1613.98px;font-size:24px;line-height:24px;color:#dfe3e9;letter-spacing:-2.602px;">PM</span><span class="t" style="left:1200.70px;top:1586.18px;font-size:24px;line-height:24px;color:#dfe3e9;letter-spacing:-0.565px;">12:00</span><span class="t" style="left:1200.70px;top:1613.98px;font-size:24px;line-height:24px;color:#dfe3e9;letter-spacing:-0.941px;">AM 21</span><span class="t" style="left:1200.70px;top:1641.78px;font-size:24px;line-height:24px;color:#dfe3e9;letter-spacing:-0.994px;">Aug 21</span>
<div class="abs" style="left:47.8px;top:1700px;width:20px;height:20px;border-radius:50%;background:#1a78b8;"></div><span class="t" style="left:79.00px;top:1699.68px;font-size:24px;line-height:24px;color:#dcdfe4;letter-spacing:-1.302px;">GROUP</span><div class="abs" style="left:182px;top:1700px;width:20px;height:20px;border-radius:50%;background:#a9d6ec;"></div><span class="t" style="left:212.70px;top:1699.68px;font-size:24px;line-height:24px;color:#dcdfe4;letter-spacing:-1.172px;">REGULAR</span>
</div></section>
<section class="panel" style="left:1418px;top:1264px;"><div class="pc" style="left:-1418px;top:-1264px;">
<span class="t" style="left:1443.00px;top:1287.14px;font-size:27px;line-height:27px;color:#9db5ce;letter-spacing:0.577px;-webkit-text-stroke:0.3px #9db5ce;">HTTP Versions</span>
<svg width="2814" height="2254" viewBox="0 0 2814 2254"><circle cx="2112" cy="1514" r="63" fill="none" stroke="#1a78b8" stroke-width="68"/><path d="M2112 1610 V1640 H2132" fill="none" stroke="#1a78b8" stroke-width="2"/></svg>
<span class="t" style="left:2133.30px;top:1623.99px;font-size:26px;line-height:26px;color:#eef2f7;letter-spacing:0.534px;">726,525 (100.0%) HTTP/1.1</span>
<div class="abs" style="left:1451.5px;top:1700px;width:20px;height:20px;border-radius:50%;background:#1a78b8;"></div><span class="t" style="left:1482.70px;top:1699.68px;font-size:24px;line-height:24px;color:#dcdfe4;letter-spacing:-1.385px;">HTTP/1.1</span>
</div></section>
<section class="panel" style="left:14px;top:1780px;"><div class="pc" style="left:-14px;top:-1780px;">
<span class="t" style="left:39.00px;top:1803.14px;font-size:27px;line-height:27px;color:#9db5ce;letter-spacing:0.329px;-webkit-text-stroke:0.3px #9db5ce;">All Traffic by Rule ID</span>
<div class="tbl" style="left:38px;top:1854px;width:1340px;height:402px;overflow:hidden;"><div class="th" style="width:1336px;"></div><div class="tr" style="top:54px;width:1336px;"></div><div class="tr" style="top:108px;width:1336px;"></div><div class="tr" style="top:162px;width:1336px;"></div><div class="tr" style="top:216px;width:1336px;"></div></div><span class="t" style="left:88.70px;top:1870.08px;font-size:24px;line-height:24px;color:#8ea6c0;letter-spacing:-0.100px;">terminatingRuleId</span><span class="t" style="left:1300.00px;top:1870.08px;font-size:24px;line-height:24px;color:#8ea6c0;letter-spacing:0.072px;">count</span><span class="t" style="left:56.73px;top:1923.88px;font-size:24px;line-height:24px;color:#8ea6c0;">1</span><span class="t" style="left:88.70px;top:1923.88px;font-size:24px;line-height:24px;color:#eef1f5;letter-spacing:0.223px;">Default_Action</span><span class="t" style="left:1264.39px;top:1926.58px;font-size:23px;line-height:23px;color:#eef1f5;font-family:'Liberation Mono', monospace;">509,127</span><span class="t" style="left:56.73px;top:1977.88px;font-size:24px;line-height:24px;color:#8ea6c0;">2</span><span class="t" style="left:88.70px;top:1977.88px;font-size:24px;line-height:24px;color:#eef1f5;letter-spacing:0.282px;">ac7ff6e7-8e8a-4c10-82d2-e68432d7e753</span><span class="t" style="left:1278.19px;top:1980.58px;font-size:23px;line-height:23px;color:#eef1f5;font-family:'Liberation Mono', monospace;">61,533</span><span class="t" style="left:56.73px;top:2031.88px;font-size:24px;line-height:24px;color:#8ea6c0;">3</span><span class="t" style="left:88.70px;top:2031.88px;font-size:24px;line-height:24px;color:#eef1f5;letter-spacing:0.484px;">61f4eb08-4e1b-4394-92b5-e8abf834fad6</span><span class="t" style="left:1278.19px;top:2034.58px;font-size:23px;line-height:23px;color:#eef1f5;font-family:'Liberation Mono', monospace;">93,524</span><span class="t" style="left:56.73px;top:2085.88px;font-size:24px;line-height:24px;color:#8ea6c0;">4</span><span class="t" style="left:88.70px;top:2085.88px;font-size:24px;line-height:24px;color:#eef1f5;letter-spacing:0.087px;">1809ecc9-81fd-4dff-99e7-a27421213155</span><span class="t" style="left:1278.19px;top:2088.58px;font-size:23px;line-height:23px;color:#eef1f5;font-family:'Liberation Mono', monospace;">62,341</span>
</div></section>
<section class="panel" style="left:1418px;top:1780px;"><div class="pc" style="left:-1418px;top:-1780px;">
<span class="t" style="left:1443.00px;top:1803.14px;font-size:27px;line-height:27px;color:#9db5ce;letter-spacing:1.085px;-webkit-text-stroke:0.3px #9db5ce;">HTTP Methods</span>
<svg width="2814" height="2254" viewBox="0 0 2814 2254"><circle cx="2112" cy="2030" r="63" fill="none" stroke="#1a78b8" stroke-width="68"/><path d="M2112 2126 V2156 H2132" fill="none" stroke="#1a78b8" stroke-width="2"/></svg>
<span class="t" style="left:2133.30px;top:2139.99px;font-size:26px;line-height:26px;color:#eef2f7;letter-spacing:0.217px;">726,525 (100.0%) GET</span>
<div class="abs" style="left:1451.5px;top:2216px;width:20px;height:20px;border-radius:50%;background:#1a78b8;"></div><span class="t" style="left:1482.70px;top:2215.68px;font-size:24px;line-height:24px;color:#dcdfe4;letter-spacing:-1.668px;">GET</span>
</div></section>
<div class="frame" style="left:0;top:0;width:2814px;height:8px;"></div><div class="frame" style="left:0;top:2246px;width:2814px;height:8px;"></div><div class="frame" style="left:0;top:0;width:8px;height:2254px;"></div><div class="frame" style="left:2806px;top:0;width:8px;height:2254px;"></div>
<div class="fr2" style="left:7px;top:7px;width:2798px;height:2238px;border:1px solid #c9c9c9;"></div>
<div class="fr2" style="left:8px;top:8px;width:2796px;height:2236px;border:1px solid #060d21;"></div>
</div></body></html>
